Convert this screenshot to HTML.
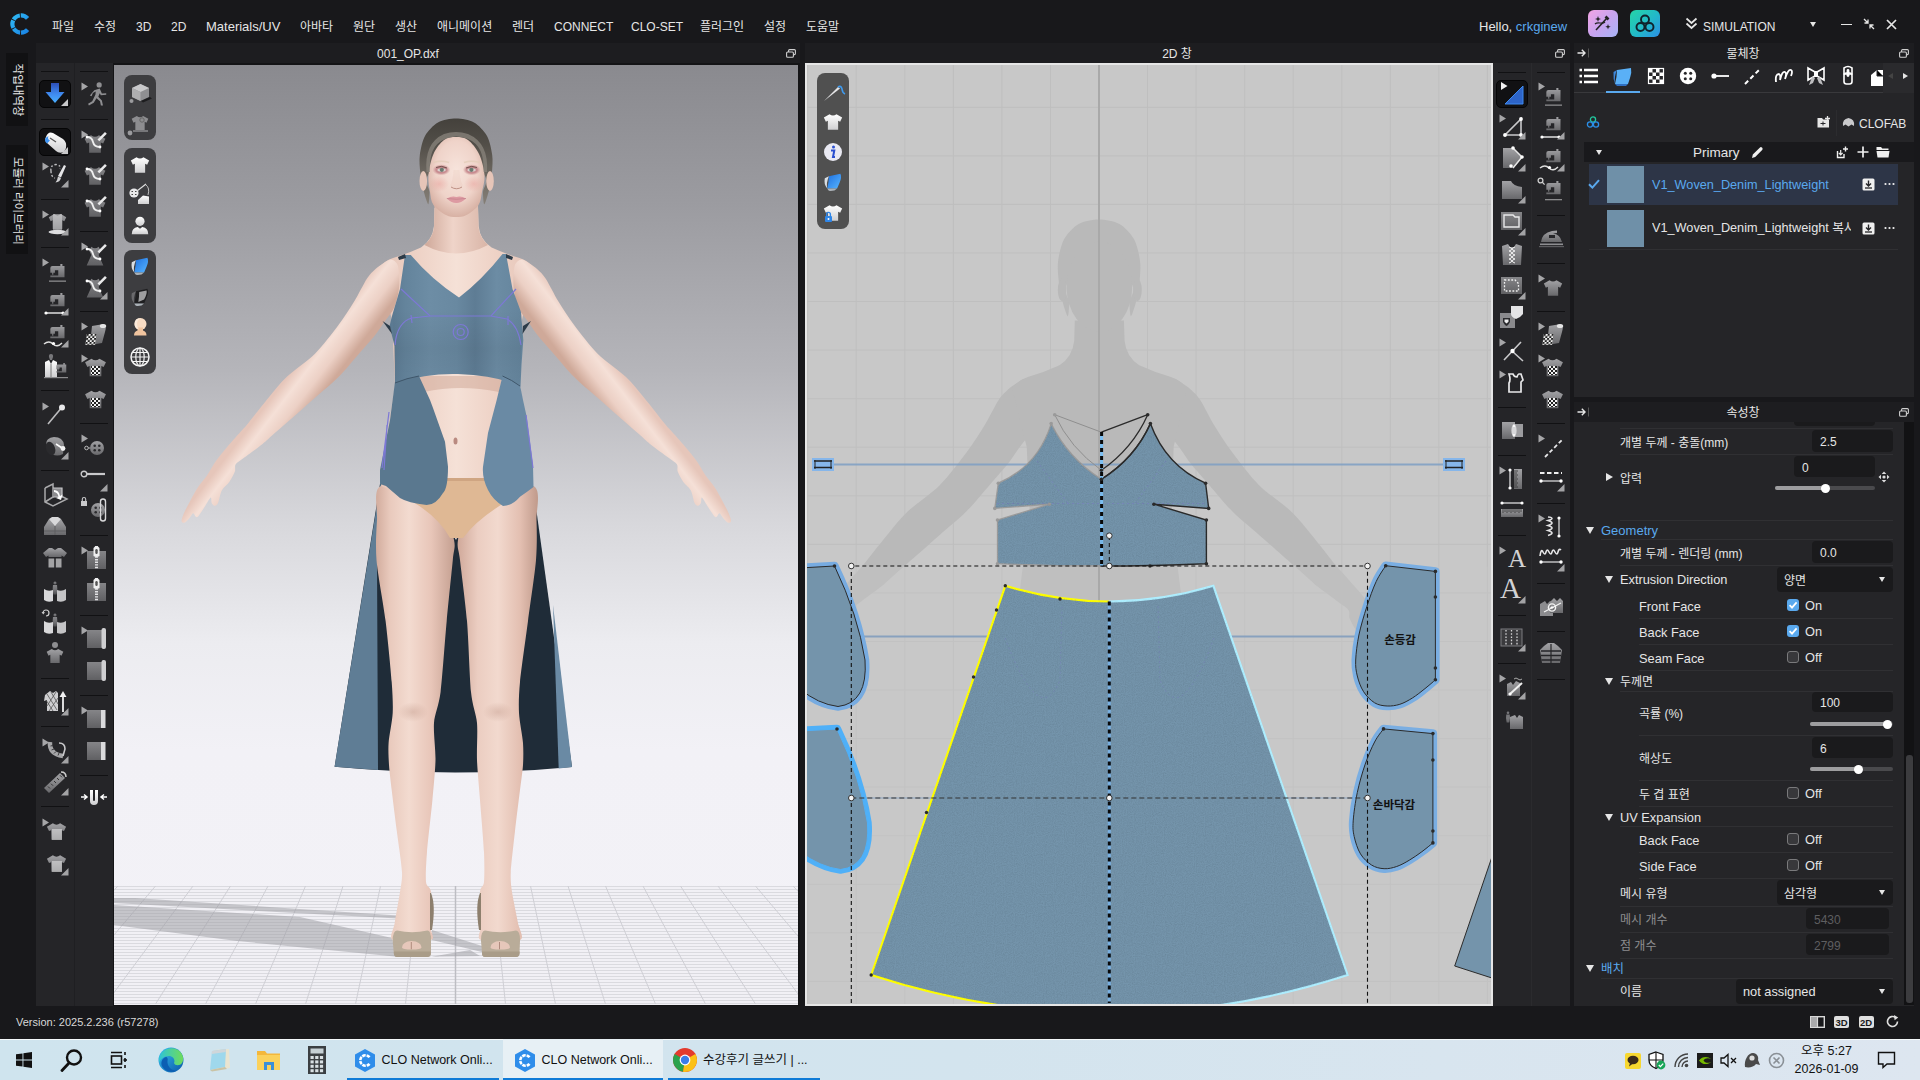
<!DOCTYPE html><html lang="ko"><head><meta charset="utf-8"><title>CLO</title><style>
*{box-sizing:border-box;margin:0;padding:0}
html,body{width:1920px;height:1080px;overflow:hidden;background:#18181b}
body{font-family:"Liberation Sans","Noto Sans CJK KR",sans-serif;font-size:12px;color:#e6e6e6;position:relative}
.a{position:absolute}
.t{position:absolute;white-space:nowrap;line-height:1}
.bar{position:absolute;background:#1d1d20}
.tb{position:absolute;background:#252528}
.sep{position:absolute;height:1px;background:#111113}
.pill{position:absolute;background:#3c3c3f;border-radius:8px}
.inp{position:absolute;background:#19191b;border-radius:4px;height:20px}
.ln{position:absolute;height:1px;background:#2f2f32}
.cb{position:absolute;width:11px;height:11px;border:1px solid #777;border-radius:3px;background:#2e2e31}
.cbon{position:absolute;width:11px;height:11px;border-radius:2px;background:#5aa9ee}
.tri{position:absolute;width:0;height:0;border-left:4px solid transparent;border-right:4px solid transparent;border-top:7px solid #e6e6e6}
.trir{position:absolute;width:0;height:0;border-top:4px solid transparent;border-bottom:4px solid transparent;border-left:7px solid #e6e6e6}
.dd{position:absolute;width:0;height:0;border-left:3.5px solid transparent;border-right:3.5px solid transparent;border-top:5px solid #e6e6e6}
.sl{position:absolute;height:4px;border-radius:2px;background:#4a4a4d}
.slf{position:absolute;height:4px;border-radius:2px;background:#9a9a9c}
.kn{position:absolute;width:9px;height:9px;border-radius:5px;background:#fff}
</style></head><body>
<div class="a" style="left:0px;top:0px;width:1920px;height:43px;background:#18181b;"></div>
<div class="t" style="left:52px;top:20.5px;font-size:12px;color:#e6e6e6;">파일</div>
<div class="t" style="left:94px;top:20.5px;font-size:12px;color:#e6e6e6;">수정</div>
<div class="t" style="left:136px;top:20.5px;font-size:12px;color:#e6e6e6;">3D</div>
<div class="t" style="left:171px;top:20.5px;font-size:12px;color:#e6e6e6;">2D</div>
<div class="t" style="left:206px;top:20.0px;font-size:13px;color:#e6e6e6;">Materials/UV</div>
<div class="t" style="left:300px;top:20.5px;font-size:12px;color:#e6e6e6;">아바타</div>
<div class="t" style="left:353px;top:20.5px;font-size:12px;color:#e6e6e6;">원단</div>
<div class="t" style="left:395px;top:20.5px;font-size:12px;color:#e6e6e6;">생산</div>
<div class="t" style="left:437px;top:20.5px;font-size:12px;color:#e6e6e6;">애니메이션</div>
<div class="t" style="left:512px;top:20.5px;font-size:12px;color:#e6e6e6;">렌더</div>
<div class="t" style="left:554px;top:20.5px;font-size:12px;color:#e6e6e6;">CONNECT</div>
<div class="t" style="left:631px;top:20.5px;font-size:12px;color:#e6e6e6;">CLO-SET</div>
<div class="t" style="left:700px;top:20.5px;font-size:12px;color:#e6e6e6;">플러그인</div>
<div class="t" style="left:764px;top:20.5px;font-size:12px;color:#e6e6e6;">설정</div>
<div class="t" style="left:806px;top:20.5px;font-size:12px;color:#e6e6e6;">도움말</div>
<div class="t" style="left:1479px;top:19.5px;font-size:13px;color:#e6e6e6;">Hello, <span style="color:#5aa9ee">crkginew</span></div>
<div class="t" style="left:1703px;top:20.5px;font-size:12px;color:#e6e6e6;">SIMULATION</div>
<div class="a" style="left:36px;top:43px;width:764px;height:20px;background:#1d1d20;"></div>
<div class="a" style="left:805px;top:43px;width:765px;height:20px;background:#1d1d20;"></div>
<div class="a" style="left:1574px;top:43px;width:340px;height:20px;background:#1d1d20;"></div>
<div class="a" style="left:1574px;top:402px;width:340px;height:20px;background:#1d1d20;"></div>
<div class="t" style="left:408px;transform:translateX(-50%);top:47.5px;font-size:12px;color:#e6e6e6;">001_OP.dxf</div>
<div class="t" style="left:1177px;transform:translateX(-50%);top:47.5px;font-size:12px;color:#e6e6e6;">2D 창</div>
<div class="t" style="left:1743px;transform:translateX(-50%);top:47.5px;font-size:12px;color:#e6e6e6;">물체창</div>
<div class="t" style="left:1743px;transform:translateX(-50%);top:406.5px;font-size:12px;color:#e6e6e6;">속성창</div>
<div class="a" style="left:6px;top:53px;width:22px;height:73px;background:#111113;"></div>
<div class="a" style="left:6px;top:145px;width:22px;height:109px;background:#111113;"></div>
<div class="t" style="left:17px;top:90px;font-size:11.5px;transform:translate(-50%,-50%) rotate(90deg)">작업내역창</div>
<div class="t" style="left:17px;top:200.5px;font-size:11.5px;transform:translate(-50%,-50%) rotate(90deg)">모듈러 라이브러리</div>
<div class="a" style="left:36px;top:63px;width:77px;height:943px;background:#252528;"></div>
<div class="a" style="left:74px;top:63px;width:1px;height:943px;background:#1f1f22;"></div>
<div class="a" style="left:1493px;top:63px;width:77px;height:943px;background:#252528;"></div>
<div class="a" style="left:1531px;top:63px;width:1px;height:943px;background:#2b2b2e;"></div>
<div class="a" style="left:113px;top:63px;width:687px;height:943px;background:#141416;"></div>
<div class="a" id="v3d" style="left:114px;top:65px;width:684px;height:940px;background:linear-gradient(#8a8a8f 0%,#9b9ba0 14.5%,#b5b5ba 32.5%,#d8d8dc 49%,#ececf0 61.5%,#f2f1f6 73%,#f3f2f7 100%);overflow:hidden"><svg style="position:absolute;left:0;top:0" width="684" height="940" viewBox="114 65 684 940">
<defs>
<linearGradient id="skinL" x1="0" x2="1" y1="0" y2="0"><stop offset="0" stop-color="#d2ac9d"/><stop offset="0.18" stop-color="#e9cabd"/><stop offset="0.42" stop-color="#f3dbd0"/><stop offset="0.7" stop-color="#e8c6b9"/><stop offset="1" stop-color="#c49f90"/></linearGradient>
<linearGradient id="skinR" x1="0" x2="1" y1="0" y2="0"><stop offset="0" stop-color="#d0a99a"/><stop offset="0.25" stop-color="#ebcdc1"/><stop offset="0.5" stop-color="#f2d9ce"/><stop offset="0.78" stop-color="#e3bfb1"/><stop offset="1" stop-color="#c09a8b"/></linearGradient>
<linearGradient id="armL" gradientUnits="userSpaceOnUse" x1="296" y1="366" x2="326" y2="389"><stop offset="0" stop-color="#e6c6ba"/><stop offset="0.3" stop-color="#f5e0d7"/><stop offset="0.65" stop-color="#ecd0c5"/><stop offset="1" stop-color="#cfa999"/></linearGradient>
<linearGradient id="armR" gradientUnits="userSpaceOnUse" x1="616.6" y1="366" x2="586.6" y2="389"><stop offset="0" stop-color="#e6c6ba"/><stop offset="0.3" stop-color="#f5e0d7"/><stop offset="0.65" stop-color="#ecd0c5"/><stop offset="1" stop-color="#cfa999"/></linearGradient>
<linearGradient id="torso" x1="0" x2="1"><stop offset="0" stop-color="#e6c6b9"/><stop offset="0.25" stop-color="#eed2c6"/><stop offset="0.5" stop-color="#f5e1d7"/><stop offset="0.75" stop-color="#eed2c6"/><stop offset="1" stop-color="#e6c6b9"/></linearGradient>
<linearGradient id="bod" x1="0" x2="1"><stop offset="0" stop-color="#5a7890"/><stop offset="0.12" stop-color="#64849c"/><stop offset="0.3" stop-color="#6d8da5"/><stop offset="0.5" stop-color="#6989a1"/><stop offset="0.64" stop-color="#5e7c94"/><stop offset="0.8" stop-color="#6c8ca4"/><stop offset="1" stop-color="#64849c"/></linearGradient>
<linearGradient id="bodv" x1="0" x2="0" y1="0" y2="1"><stop offset="0" stop-color="#000" stop-opacity="0"/><stop offset="0.5" stop-color="#000" stop-opacity="0.06"/><stop offset="1" stop-color="#000" stop-opacity="0.02"/></linearGradient>
<linearGradient id="hair" x1="0" x2="0" y1="0" y2="1"><stop offset="0" stop-color="#44413c"/><stop offset="0.3" stop-color="#524e48"/><stop offset="0.6" stop-color="#69645d"/><stop offset="1" stop-color="#857f77"/></linearGradient>
<radialGradient id="face" cx="0.5" cy="0.42" r="0.62"><stop offset="0" stop-color="#f7e4dc"/><stop offset="0.6" stop-color="#efd3c9"/><stop offset="1" stop-color="#d3ab9d"/></radialGradient>
<linearGradient id="neck" x1="0" x2="1"><stop offset="0" stop-color="#cfa899"/><stop offset="0.45" stop-color="#efd4c9"/><stop offset="1" stop-color="#d9b5a7"/></linearGradient>
<radialGradient id="knee"><stop offset="0" stop-color="#c39a8b" stop-opacity="0.45"/><stop offset="1" stop-color="#c39a8b" stop-opacity="0"/></radialGradient>
<radialGradient id="cheek"><stop offset="0" stop-color="#e89b96" stop-opacity="0.45"/><stop offset="1" stop-color="#e89b96" stop-opacity="0"/></radialGradient><radialGradient id="eyesh"><stop offset="0" stop-color="#bd7a82" stop-opacity="1"/><stop offset="0.62" stop-color="#c4868b" stop-opacity="0.9"/><stop offset="1" stop-color="#d39c9c" stop-opacity="0"/></radialGradient>
<pattern id="hl" x="0" y="886" width="8" height="3" patternUnits="userSpaceOnUse"><rect width="8" height="3" fill="#f1f0f5"/><rect width="8" height="1" fill="#dadadf"/></pattern>
</defs>
<rect x="114" y="886" width="684" height="119" fill="url(#hl)"/>
<line x1="80.5" y1="886" x2="-44.5" y2="1004" stroke="#cfcfd5" stroke-width="1"/>
<line x1="118.0" y1="886" x2="5.5" y2="1004" stroke="#cfcfd5" stroke-width="1"/>
<line x1="155.5" y1="886" x2="55.5" y2="1004" stroke="#cfcfd5" stroke-width="1"/>
<line x1="193.0" y1="886" x2="105.5" y2="1004" stroke="#cfcfd5" stroke-width="1"/>
<line x1="230.5" y1="886" x2="155.5" y2="1004" stroke="#cfcfd5" stroke-width="1"/>
<line x1="268.0" y1="886" x2="205.5" y2="1004" stroke="#cfcfd5" stroke-width="1"/>
<line x1="305.5" y1="886" x2="255.5" y2="1004" stroke="#cfcfd5" stroke-width="1"/>
<line x1="343.0" y1="886" x2="305.5" y2="1004" stroke="#cfcfd5" stroke-width="1"/>
<line x1="380.5" y1="886" x2="355.5" y2="1004" stroke="#cfcfd5" stroke-width="1"/>
<line x1="418.0" y1="886" x2="405.5" y2="1004" stroke="#cfcfd5" stroke-width="1"/>
<line x1="455.5" y1="886" x2="455.5" y2="1004" stroke="#bdbdc3" stroke-width="1.5"/>
<line x1="493.0" y1="886" x2="505.5" y2="1004" stroke="#cfcfd5" stroke-width="1"/>
<line x1="530.5" y1="886" x2="555.5" y2="1004" stroke="#cfcfd5" stroke-width="1"/>
<line x1="568.0" y1="886" x2="605.5" y2="1004" stroke="#cfcfd5" stroke-width="1"/>
<line x1="605.5" y1="886" x2="655.5" y2="1004" stroke="#cfcfd5" stroke-width="1"/>
<line x1="643.0" y1="886" x2="705.5" y2="1004" stroke="#cfcfd5" stroke-width="1"/>
<line x1="680.5" y1="886" x2="755.5" y2="1004" stroke="#cfcfd5" stroke-width="1"/>
<line x1="718.0" y1="886" x2="805.5" y2="1004" stroke="#cfcfd5" stroke-width="1"/>
<line x1="755.5" y1="886" x2="855.5" y2="1004" stroke="#cfcfd5" stroke-width="1"/>
<line x1="793.0" y1="886" x2="905.5" y2="1004" stroke="#cfcfd5" stroke-width="1"/>
<line x1="830.5" y1="886" x2="955.5" y2="1004" stroke="#cfcfd5" stroke-width="1"/>
<path d="M114 898 L135 898 L398 915.5 L398 918.5 L114 903Z" fill="#9a9aa0" fill-opacity="0.5"/>
<path d="M114 905 L300 917 L392 938 L396 955 L430 957 L470 950 L480 956 L400 957 L237 941 L114 925Z" fill="#9a9aa0" fill-opacity="0.5"/>
<path d="M432 930 L482 946 L482 952 L432 940Z" fill="#9a9aa0" fill-opacity="0.5"/>
<path d="M380 484 L334.6 766.8 Q455 778 572 767 L533 486 Z" fill="#1f2c38"/>
<path d="M381 480 L334.6 766.8 L378 770 L377 560 L382 500Z" fill="#5f7d95"/>
<path d="M553 605 L572 767 L558.7 768.5 Z" fill="#6a8aa4"/>
<path d="M381.0 486.0 C372.6 488.7 377.6 510.1 377.0 520.0 C376.4 529.9 375.4 546.5 376.5 560.0 C377.6 573.5 383.6 604.7 385.6 621.0 C387.6 637.3 390.8 669.7 391.7 682.0 C392.6 694.3 393.1 704.9 392.7 713.0 C392.3 721.1 389.1 736.1 388.6 743.0 C388.1 749.9 388.6 758.7 389.0 765.0 C389.4 771.3 390.7 781.2 391.7 790.0 C392.7 798.8 395.4 820.1 396.8 831.0 C398.2 841.9 401.6 863.9 402.0 872.0 C402.4 880.1 401.0 885.2 400.0 892.0 C399.0 898.8 395.6 916.6 394.7 923.0 C393.8 929.4 388.2 937.7 393.0 940.0 C397.8 942.3 426.1 942.0 431.0 940.0 C435.9 938.0 430.0 931.4 430.0 925.0 C430.0 918.6 431.5 897.7 431.0 892.0 C430.5 886.3 426.5 887.3 426.0 882.0 C425.5 876.7 426.1 862.9 427.0 852.0 C427.9 841.1 431.3 812.3 432.4 800.0 C433.5 787.7 435.3 770.3 435.5 760.0 C435.7 749.7 433.3 732.1 434.0 723.0 C434.7 713.9 438.9 705.6 440.6 692.0 C442.3 678.4 445.1 638.6 446.7 621.0 C448.3 603.4 451.8 570.8 452.8 560.0 C453.8 549.2 455.7 548.0 454.0 540.0 C452.3 532.0 449.7 507.2 440.0 500.0 C430.3 492.8 389.4 483.3 381.0 486.0Z" fill="url(#skinL)"/>
<path d="M533.0 486.0 C541.9 488.7 536.1 510.1 536.5 520.0 C536.9 529.9 537.1 546.5 536.0 560.0 C534.9 573.5 530.1 604.7 528.0 621.0 C525.9 637.3 521.2 669.7 520.0 682.0 C518.8 694.3 518.6 704.9 519.0 713.0 C519.4 721.1 522.5 736.1 523.0 743.0 C523.5 749.9 523.4 758.7 523.0 765.0 C522.6 771.3 521.1 781.2 520.0 790.0 C518.9 798.8 516.2 820.1 515.0 831.0 C513.8 841.9 511.2 863.9 510.8 872.0 C510.4 880.1 511.0 885.2 512.0 892.0 C513.0 898.8 516.9 916.6 518.0 923.0 C519.1 929.4 524.9 937.7 520.0 940.0 C515.1 942.3 486.2 942.0 481.0 940.0 C475.8 938.0 481.1 931.4 481.0 925.0 C480.9 918.6 479.6 897.7 480.0 892.0 C480.4 886.3 483.5 887.3 484.0 882.0 C484.5 876.7 484.5 862.9 484.0 852.0 C483.5 841.1 480.9 812.3 480.0 800.0 C479.1 787.7 477.4 770.3 477.0 760.0 C476.6 749.7 477.8 732.1 477.0 723.0 C476.2 713.9 472.3 705.6 471.0 692.0 C469.7 678.4 468.5 638.6 467.0 621.0 C465.5 603.4 461.2 570.8 460.0 560.0 C458.8 549.2 456.7 548.0 458.0 540.0 C459.3 532.0 460.0 507.2 470.0 500.0 C480.0 492.8 524.1 483.3 533.0 486.0Z" fill="url(#skinR)"/>
<ellipse cx="413" cy="712" rx="15" ry="10" fill="url(#knee)"/><ellipse cx="498" cy="712" rx="15" ry="10" fill="url(#knee)"/>
<path d="M392.7 941 Q392.5 931 397 930.5 Q412 934 427.5 930.5 Q431.5 931 431 941 L431 953 Q431 957 427 957 L397 957 Q394 957 393.8 953 Z" fill="#b9ac99"/>
<path d="M481 941 Q480.8 931 485 930.5 Q500 934 516 930.5 Q520.3 931 520 941 L519.5 953 Q519.5 957 516 957 L485 957 Q482 957 482 953 Z" fill="#b9ac99"/>
<path d="M402 947.5 Q402.5 941.5 411.5 941 Q421 941.5 421.5 947.5 Q421 949.5 411.5 949.5 Q402.5 949.5 402 947.5Z" fill="#e6c7ba"/><path d="M490.5 947.5 Q491 941.5 500 941 Q509.5 941.5 510 947.5 Q509.5 949.5 500 949.5 Q491 949.5 490.5 947.5Z" fill="#e6c7ba"/>
<path d="M411.3 942V949.3M499.5 942V949.3" stroke="#b08b7e" stroke-width="1"/>
<path d="M394 951.5 H430.8 V953 Q431 957 427 957 L397 957 Q394 957 393.8 953Z" fill="#a99c88"/><path d="M482 951.5 H519.6 V953 Q519.5 957 516 957 L485 957 Q482 957 482 953Z" fill="#a99c88"/>
<path d="M431 893 Q436 905 432 930 L430 930 L430 893Z" fill="#8d7f6d"/><path d="M480 893 Q475 905 479 930 L481 930 L481 893Z" fill="#8d7f6d"/>
<path d="M434.5 208 L434 226 Q432.5 240 421 247.5 Q408 253.5 393 258 Q384 261 379 268 L392 320 L395 385 L388 430 L381 486 L440 510 L456 540 L470 510 L533 486 L526 430 L520 385 L522 320 L533.6 268 Q528.6 261 519.6 258 Q504.6 253.5 491.6 247.5 Q480 240 478.6 226 L478 208 Z" fill="url(#torso)"/>
<path d="M434.5 205 L478 205 L478.6 228 Q480 238 488 245 Q456 262 424.5 245 Q432.5 238 434 228Z" fill="url(#neck)"/>
<path d="M398.0 266.0 C396.8 261.7 393.2 259.9 391.0 259.5 C388.8 259.1 385.4 262.0 383.0 263.5 C380.6 265.0 377.4 267.2 375.0 269.5 C372.6 271.8 370.1 273.7 367.0 278.5 C363.9 283.3 358.3 294.8 354.0 301.8 C349.7 308.8 344.4 317.2 338.5 325.0 C332.6 332.8 322.8 345.9 315.0 353.7 C307.2 361.5 293.6 370.4 286.6 377.0 C279.6 383.6 274.3 390.7 268.5 397.7 C262.7 404.7 251.7 418.9 247.8 423.7 C243.9 428.5 245.3 426.6 242.2 430.0 C239.1 433.4 231.3 442.1 227.4 446.7 C223.5 451.3 219.4 456.3 216.3 460.6 C213.2 464.9 209.8 471.4 207.0 475.4 C204.2 479.4 200.3 483.6 197.8 487.4 C195.3 491.1 192.5 496.5 190.4 500.4 C188.3 504.3 185.2 510.2 183.9 513.3 C182.6 516.4 181.4 519.8 181.6 521.2 C181.8 522.6 183.8 523.0 185.0 522.5 C186.2 522.0 188.3 519.4 189.5 518.0 C190.7 516.6 192.2 513.5 193.1 513.3 C194.0 513.1 195.0 516.4 195.8 516.8 C196.6 517.2 197.1 517.6 198.5 516.0 C199.9 514.4 203.4 508.8 205.2 506.0 C207.0 503.2 209.7 498.1 210.7 497.6 C211.7 497.2 211.1 501.8 211.7 503.0 C212.3 504.2 213.5 505.8 214.4 505.8 C215.3 505.8 216.9 505.3 218.0 503.0 C219.1 500.7 220.2 493.4 221.9 490.2 C223.6 487.0 227.4 484.7 229.3 481.9 C231.2 479.1 233.8 474.3 234.8 471.7 C235.8 469.1 234.3 466.4 235.7 464.3 C237.1 462.2 240.0 460.9 244.0 457.8 C248.0 454.7 258.1 447.5 262.6 443.9 C267.1 440.3 268.9 438.2 273.7 434.0 C278.5 429.8 288.2 421.3 294.4 415.9 C300.6 410.5 308.4 403.5 315.0 397.7 C321.6 391.9 331.9 383.6 338.5 377.0 C345.1 370.4 353.6 359.9 359.0 353.7 C364.4 347.5 370.9 340.4 374.8 335.5 C378.7 330.6 382.1 325.1 385.0 321.0 C387.9 316.9 391.9 312.9 394.0 308.0 C396.1 303.1 398.4 294.3 399.0 288.0 C399.6 281.7 399.2 270.3 398.0 266.0Z" fill="url(#armL)"/>
<path d="M514.6 266.0 C515.8 261.7 519.4 259.9 521.6 259.5 C523.9 259.1 527.2 262.0 529.6 263.5 C532.0 265.0 535.2 267.2 537.6 269.5 C540.0 271.8 542.5 273.7 545.6 278.5 C548.8 283.3 554.3 294.8 558.6 301.8 C562.9 308.8 568.2 317.2 574.1 325.0 C580.0 332.8 589.8 345.9 597.6 353.7 C605.4 361.5 619.0 370.4 626.0 377.0 C633.0 383.6 638.3 390.7 644.1 397.7 C649.9 404.7 660.9 418.9 664.8 423.7 C668.7 428.5 667.3 426.6 670.4 430.0 C673.5 433.4 681.3 442.1 685.2 446.7 C689.1 451.3 693.2 456.3 696.3 460.6 C699.4 464.9 702.8 471.4 705.6 475.4 C708.4 479.4 712.3 483.6 714.8 487.4 C717.3 491.1 720.1 496.5 722.2 500.4 C724.3 504.3 727.4 510.2 728.7 513.3 C730.0 516.4 731.2 519.8 731.0 521.2 C730.8 522.6 728.8 523.0 727.6 522.5 C726.4 522.0 724.3 519.4 723.1 518.0 C721.9 516.6 720.4 513.5 719.5 513.3 C718.6 513.1 717.6 516.4 716.8 516.8 C716.0 517.2 715.5 517.6 714.1 516.0 C712.7 514.4 709.2 508.8 707.4 506.0 C705.6 503.2 702.9 498.1 701.9 497.6 C700.9 497.2 701.5 501.8 700.9 503.0 C700.3 504.2 699.1 505.8 698.2 505.8 C697.3 505.8 695.7 505.3 694.6 503.0 C693.5 500.7 692.4 493.4 690.7 490.2 C689.0 487.0 685.2 484.7 683.3 481.9 C681.4 479.1 678.8 474.3 677.8 471.7 C676.8 469.1 678.3 466.4 676.9 464.3 C675.5 462.2 672.6 460.9 668.6 457.8 C664.6 454.7 654.5 447.5 650.0 443.9 C645.5 440.3 643.7 438.2 638.9 434.0 C634.1 429.8 624.4 421.3 618.2 415.9 C612.0 410.5 604.2 403.5 597.6 397.7 C591.0 391.9 580.7 383.6 574.1 377.0 C567.5 370.4 559.0 359.9 553.6 353.7 C548.2 347.5 541.7 340.4 537.8 335.5 C533.9 330.6 530.5 325.1 527.6 321.0 C524.7 316.9 520.7 312.9 518.6 308.0 C516.5 303.1 514.2 294.3 513.6 288.0 C513.0 281.7 513.4 270.3 514.6 266.0Z" fill="url(#armR)"/>
<path d="M419 376 L502.5 376 L499 392 Q460 384 424 392Z" fill="#c99f8f" opacity="0.45"/>
<path d="M430 478 L497 478 L520 494 Q480 515 463 538 L450 538 Q436 512 398 494 Z" fill="#dfb894"/>
<path d="M430 478 L497 478 L497 481 L430 481Z" fill="#cfa582"/>
<ellipse cx="455.5" cy="441" rx="2" ry="3.5" fill="#b98a80"/>
<path d="M405 255 L410.8 255 Q432 280 459 297.5 Q482 280 502.5 254 L506 254 L512.5 289 L521 312 L523.3 340 L521.5 365 L520.5 386.7 Q500 376 458 374 Q428 373 395 383 L394.5 346 L389.6 326 L392 316 L400 289 Z" fill="url(#bod)"/>
<path d="M392.5 310 L523 310 L520 386.7 Q500 376 458 374 Q428 373 395 383 Z" fill="url(#bodv)"/>
<path d="M398 257 L405 254 L406 258 L399 260Z" fill="#2c3b48"/><path d="M506 254 L513 257 L512 260 L506 258Z" fill="#2c3b48"/>
<path d="M382.5 321 L390 326 L392 334 Z" fill="#2c3b48"/><path d="M531 321 L523 326 L522.5 334 Z" fill="#2c3b48"/>
<path d="M395 381.7 L419 376 L430 400 L433 408 L445 441.7 L448 466.7 Q448 488 443 493 Q436 505 426.7 505 Q408 503 400 498 L386 486 L380 484 L380 470 L390 420 Z" fill="#5a788f"/>
<path d="M502.5 376 L520 385 L523 400 L526.7 416.7 L533 466 L533.5 487 Q527 492 520 496.7 Q512 506 503 506 Q493 500 488 490 Q482 478 483 466.7 L488 433 L496.7 400 Z" fill="#6a8aa4"/>
<path d="M395 383 Q407 378 419 376" stroke="#3f566a" stroke-width="1" fill="none"/><path d="M502.5 376 Q512 380 520 386" stroke="#3f566a" stroke-width="1" fill="none"/>
<g stroke="#7d78d6" stroke-width="1.2" fill="none"><path d="M401 289 L430 316 L491 316 L516 289"/><path d="M395 345 Q397 322 412 318 L430 316"/><path d="M491 316 L507 319 Q518 325 521 345"/><circle cx="460.7" cy="332" r="7.5"/><circle cx="460.7" cy="332" r="3.5"/><path d="M411 315 L412 323 M508 316 L508 325"/><path d="M389 412 L382 468 M387 425 L384 470"/><path d="M526 415 L533 468"/></g>
<path d="M456.0 118.5 C450.6 118.5 442.6 119.9 438.0 122.5 C433.4 125.1 427.7 131.1 425.0 136.0 C422.3 140.9 420.5 149.6 419.8 155.0 C419.0 160.4 419.8 167.3 420.2 172.0 C420.6 176.7 421.6 181.9 422.5 186.0 C423.4 190.1 425.1 196.3 426.0 199.0 C426.9 201.7 428.0 205.1 428.5 204.0 C429.0 202.9 429.6 196.2 429.5 192.0 C429.4 187.8 423.5 182.3 427.5 176.0 C431.5 169.7 447.4 150.0 456.0 150.0 C464.6 150.0 480.9 169.7 485.0 176.0 C489.1 182.3 483.1 187.8 483.0 192.0 C482.9 196.2 483.5 202.9 484.0 204.0 C484.5 205.1 485.6 201.7 486.5 199.0 C487.4 196.3 489.2 190.1 490.0 186.0 C490.8 181.9 491.7 176.7 492.0 172.0 C492.3 167.3 493.0 160.4 492.2 155.0 C491.5 149.6 489.7 140.9 487.0 136.0 C484.3 131.1 478.6 125.1 474.0 122.5 C469.4 119.9 461.4 118.5 456.0 118.5Z" fill="url(#hair)"/>
<ellipse cx="423.3" cy="181" rx="3.8" ry="10" fill="#e6c5b8"/><ellipse cx="490" cy="181" rx="3.8" ry="10" fill="#e6c5b8"/>
<path d="M456.0 137.0 C452.0 137.0 447.8 137.2 444.0 140.0 C440.2 142.8 436.1 148.2 433.5 154.0 C430.9 159.8 429.1 168.7 428.5 175.0 C427.9 181.3 429.2 187.0 430.0 192.0 C430.8 197.0 430.8 201.2 433.5 205.0 C436.2 208.8 442.2 213.0 446.0 215.0 C449.8 217.0 452.6 217.0 456.0 217.0 C459.4 217.0 462.8 217.0 466.5 215.0 C470.2 213.0 475.9 208.8 478.5 205.0 C481.1 201.2 481.0 197.0 482.0 192.0 C483.0 187.0 485.0 181.3 484.5 175.0 C484.0 168.7 481.8 159.8 479.0 154.0 C476.2 148.2 471.8 142.8 468.0 140.0 C464.2 137.2 460.0 137.0 456.0 137.0Z" fill="url(#face)"/>
<path d="M430 172 Q428 146 445 139 Q456 134 468 139 Q485 146 483.5 172 L487 172 Q489 143 468 134 Q456 130 444 134 Q424 143 426.5 172Z" fill="#8a847c" opacity="0.75"/>
<ellipse cx="441.4" cy="169.8" rx="9" ry="5.6" fill="url(#eyesh)"/><ellipse cx="471.8" cy="169.8" rx="9" ry="5.6" fill="url(#eyesh)"/>
<ellipse cx="441.6" cy="170" rx="4.2" ry="1.7" fill="#d8d2cf"/><ellipse cx="471.6" cy="170" rx="4.2" ry="1.7" fill="#d8d2cf"/><circle cx="441.8" cy="169.8" r="2.1" fill="#6b7b70"/><circle cx="471.4" cy="169.8" r="2.1" fill="#6b7b70"/>
<path d="M433.5 162.5 Q441 160 449 162.5 M464 162.5 Q472 160 479.5 162.5" stroke="#e4cdb9" stroke-width="1.6" fill="none" opacity="0.8"/>
<path d="M436 167.5 Q441.6 165 447 168" stroke="#5a4038" stroke-width="0.8" fill="none"/><path d="M466 168 Q471.6 165 477 167.5" stroke="#5a4038" stroke-width="0.8" fill="none"/>
<path d="M450.5 185 Q451 189 456.5 189 Q462 189 462.5 185 Q460 180 459.5 170 L453.5 170 Q453 180 450.5 185Z" fill="#e2bcae" opacity="0.18"/><path d="M451 187 Q456.5 190.5 462 187" stroke="#b88a7e" stroke-width="0.9" fill="none"/>
<path d="M446.8 198.5 Q452 195.5 456.4 197 Q461 195.5 466 198.5 Q461 203 456.4 203 Q451.5 203 446.8 198.5Z" fill="#dd9aa2"/><path d="M446.8 198.5 Q456.4 200 466 198.5" stroke="#c27e88" stroke-width="0.7" fill="none"/>
<ellipse cx="439" cy="184" rx="10" ry="8" fill="url(#cheek)"/><ellipse cx="474" cy="184" rx="10" ry="8" fill="url(#cheek)"/>
</svg>
<div class="pill" style="left:10px;top:10px;width:32px;height:65px;background:#3d3d40"></div>
<div class="pill" style="left:10px;top:83px;width:32px;height:95px;background:#3d3d40"></div>
<div class="pill" style="left:10px;top:185px;width:32px;height:124px;background:#3d3d40"></div></div>
<div class="a" style="left:805px;top:63px;width:688px;height:943px;background:#e6e6e6;"></div>
<div class="a" id="v2d" style="left:807px;top:65px;width:684px;height:939px;background:#c8c8c8;overflow:hidden"><svg style="position:absolute;left:0;top:0" width="684" height="939" viewBox="807 65 684 939">
<defs>
<filter id="tex" x="0" y="0" width="100%" height="100%"><feTurbulence type="fractalNoise" baseFrequency="0.9" numOctaves="2" seed="3" result="n"/><feColorMatrix in="n" type="matrix" values="0 0 0 0 0  0 0 0 0 0  0 0 0 0 0  0.6 0.6 0 0 -0.45" result="a"/><feComposite in="a" in2="SourceGraphic" operator="in"/></filter>
</defs>
<path d="M759.2 65V1004 M807.7 65V1004 M856.2 65V1004 M904.8 65V1004 M953.4 65V1004 M1001.9 65V1004 M1050.5 65V1004 M1147.5 65V1004 M1196.1 65V1004 M1244.7 65V1004 M1293.2 65V1004 M1341.8 65V1004 M1390.3 65V1004 M1438.8 65V1004 M1487.4 65V1004 M807 107.3H1491 M807 155.9H1491 M807 204.4H1491 M807 253.0H1491 M807 301.5H1491 M807 350.1H1491 M807 398.7H1491 M807 447.2H1491 M807 495.8H1491 M807 544.3H1491 M807 592.9H1491 M807 641.5H1491 M807 690.0H1491 M807 738.6H1491 M807 787.1H1491 M807 835.7H1491 M807 884.3H1491 M807 932.8H1491 M807 981.4H1491 M807 1029.9H1491" stroke="#bfbfbf" stroke-width="1" fill="none"/>
<g transform="translate(1099.4 219.4) scale(1.13) translate(-456.3 -118.5)" fill="#b9b9b9">
<path d="M398.0 266.0 C396.8 261.7 393.2 259.9 391.0 259.5 C388.8 259.1 385.4 262.0 383.0 263.5 C380.6 265.0 377.4 267.2 375.0 269.5 C372.6 271.8 370.1 273.7 367.0 278.5 C363.9 283.3 358.3 294.8 354.0 301.8 C349.7 308.8 344.4 317.2 338.5 325.0 C332.6 332.8 322.8 345.9 315.0 353.7 C307.2 361.5 293.6 370.4 286.6 377.0 C279.6 383.6 274.3 390.7 268.5 397.7 C262.7 404.7 251.7 418.9 247.8 423.7 C243.9 428.5 245.3 426.6 242.2 430.0 C239.1 433.4 231.3 442.1 227.4 446.7 C223.5 451.3 219.4 456.3 216.3 460.6 C213.2 464.9 209.8 471.4 207.0 475.4 C204.2 479.4 200.3 483.6 197.8 487.4 C195.3 491.1 192.5 496.5 190.4 500.4 C188.3 504.3 185.2 510.2 183.9 513.3 C182.6 516.4 181.4 519.8 181.6 521.2 C181.8 522.6 183.8 523.0 185.0 522.5 C186.2 522.0 188.3 519.4 189.5 518.0 C190.7 516.6 192.2 513.5 193.1 513.3 C194.0 513.1 195.0 516.4 195.8 516.8 C196.6 517.2 197.1 517.6 198.5 516.0 C199.9 514.4 203.4 508.8 205.2 506.0 C207.0 503.2 209.7 498.1 210.7 497.6 C211.7 497.2 211.1 501.8 211.7 503.0 C212.3 504.2 213.5 505.8 214.4 505.8 C215.3 505.8 216.9 505.3 218.0 503.0 C219.1 500.7 220.2 493.4 221.9 490.2 C223.6 487.0 227.4 484.7 229.3 481.9 C231.2 479.1 233.8 474.3 234.8 471.7 C235.8 469.1 234.3 466.4 235.7 464.3 C237.1 462.2 240.0 460.9 244.0 457.8 C248.0 454.7 258.1 447.5 262.6 443.9 C267.1 440.3 268.9 438.2 273.7 434.0 C278.5 429.8 288.2 421.3 294.4 415.9 C300.6 410.5 308.4 403.5 315.0 397.7 C321.6 391.9 331.9 383.6 338.5 377.0 C345.1 370.4 353.6 359.9 359.0 353.7 C364.4 347.5 370.9 340.4 374.8 335.5 C378.7 330.6 382.1 325.1 385.0 321.0 C387.9 316.9 391.9 312.9 394.0 308.0 C396.1 303.1 398.4 294.3 399.0 288.0 C399.6 281.7 399.2 270.3 398.0 266.0Z"/><path d="M514.6 266.0 C515.8 261.7 519.4 259.9 521.6 259.5 C523.9 259.1 527.2 262.0 529.6 263.5 C532.0 265.0 535.2 267.2 537.6 269.5 C540.0 271.8 542.5 273.7 545.6 278.5 C548.8 283.3 554.3 294.8 558.6 301.8 C562.9 308.8 568.2 317.2 574.1 325.0 C580.0 332.8 589.8 345.9 597.6 353.7 C605.4 361.5 619.0 370.4 626.0 377.0 C633.0 383.6 638.3 390.7 644.1 397.7 C649.9 404.7 660.9 418.9 664.8 423.7 C668.7 428.5 667.3 426.6 670.4 430.0 C673.5 433.4 681.3 442.1 685.2 446.7 C689.1 451.3 693.2 456.3 696.3 460.6 C699.4 464.9 702.8 471.4 705.6 475.4 C708.4 479.4 712.3 483.6 714.8 487.4 C717.3 491.1 720.1 496.5 722.2 500.4 C724.3 504.3 727.4 510.2 728.7 513.3 C730.0 516.4 731.2 519.8 731.0 521.2 C730.8 522.6 728.8 523.0 727.6 522.5 C726.4 522.0 724.3 519.4 723.1 518.0 C721.9 516.6 720.4 513.5 719.5 513.3 C718.6 513.1 717.6 516.4 716.8 516.8 C716.0 517.2 715.5 517.6 714.1 516.0 C712.7 514.4 709.2 508.8 707.4 506.0 C705.6 503.2 702.9 498.1 701.9 497.6 C700.9 497.2 701.5 501.8 700.9 503.0 C700.3 504.2 699.1 505.8 698.2 505.8 C697.3 505.8 695.7 505.3 694.6 503.0 C693.5 500.7 692.4 493.4 690.7 490.2 C689.0 487.0 685.2 484.7 683.3 481.9 C681.4 479.1 678.8 474.3 677.8 471.7 C676.8 469.1 678.3 466.4 676.9 464.3 C675.5 462.2 672.6 460.9 668.6 457.8 C664.6 454.7 654.5 447.5 650.0 443.9 C645.5 440.3 643.7 438.2 638.9 434.0 C634.1 429.8 624.4 421.3 618.2 415.9 C612.0 410.5 604.2 403.5 597.6 397.7 C591.0 391.9 580.7 383.6 574.1 377.0 C567.5 370.4 559.0 359.9 553.6 353.7 C548.2 347.5 541.7 340.4 537.8 335.5 C533.9 330.6 530.5 325.1 527.6 321.0 C524.7 316.9 520.7 312.9 518.6 308.0 C516.5 303.1 514.2 294.3 513.6 288.0 C513.0 281.7 513.4 270.3 514.6 266.0Z"/><path d="M434.5 208 L434 226 Q432.5 240 421 247.5 Q408 253.5 393 258 Q384 261 379 268 L392 320 L395 385 L388 430 L381 486 L440 510 L456 540 L470 510 L533 486 L526 430 L520 385 L522 320 L533.6 268 Q528.6 261 519.6 258 Q504.6 253.5 491.6 247.5 Q480 240 478.6 226 L478 208 Z"/><path d="M381.0 486.0 C372.6 488.7 377.6 510.1 377.0 520.0 C376.4 529.9 375.4 546.5 376.5 560.0 C377.6 573.5 383.6 604.7 385.6 621.0 C387.6 637.3 390.8 669.7 391.7 682.0 C392.6 694.3 393.1 704.9 392.7 713.0 C392.3 721.1 389.1 736.1 388.6 743.0 C388.1 749.9 388.6 758.7 389.0 765.0 C389.4 771.3 390.7 781.2 391.7 790.0 C392.7 798.8 395.4 820.1 396.8 831.0 C398.2 841.9 401.6 863.9 402.0 872.0 C402.4 880.1 401.0 885.2 400.0 892.0 C399.0 898.8 395.6 916.6 394.7 923.0 C393.8 929.4 388.2 937.7 393.0 940.0 C397.8 942.3 426.1 942.0 431.0 940.0 C435.9 938.0 430.0 931.4 430.0 925.0 C430.0 918.6 431.5 897.7 431.0 892.0 C430.5 886.3 426.5 887.3 426.0 882.0 C425.5 876.7 426.1 862.9 427.0 852.0 C427.9 841.1 431.3 812.3 432.4 800.0 C433.5 787.7 435.3 770.3 435.5 760.0 C435.7 749.7 433.3 732.1 434.0 723.0 C434.7 713.9 438.9 705.6 440.6 692.0 C442.3 678.4 445.1 638.6 446.7 621.0 C448.3 603.4 451.8 570.8 452.8 560.0 C453.8 549.2 455.7 548.0 454.0 540.0 C452.3 532.0 449.7 507.2 440.0 500.0 C430.3 492.8 389.4 483.3 381.0 486.0Z"/><path d="M531.6 486.0 C540.0 488.7 535.0 510.1 535.6 520.0 C536.2 529.9 537.2 546.5 536.1 560.0 C535.0 573.5 529.0 604.7 527.0 621.0 C525.0 637.3 521.8 669.7 520.9 682.0 C520.0 694.3 519.5 704.9 519.9 713.0 C520.3 721.1 523.5 736.1 524.0 743.0 C524.5 749.9 524.0 758.7 523.6 765.0 C523.2 771.3 521.9 781.2 520.9 790.0 C519.9 798.8 517.2 820.1 515.8 831.0 C514.4 841.9 511.0 863.9 510.6 872.0 C510.2 880.1 511.6 885.2 512.6 892.0 C513.6 898.8 517.0 916.6 517.9 923.0 C518.8 929.4 524.4 937.7 519.6 940.0 C514.8 942.3 486.5 942.0 481.6 940.0 C476.7 938.0 482.6 931.4 482.6 925.0 C482.6 918.6 481.1 897.7 481.6 892.0 C482.1 886.3 486.1 887.3 486.6 882.0 C487.1 876.7 486.5 862.9 485.6 852.0 C484.7 841.1 481.3 812.3 480.2 800.0 C479.1 787.7 477.3 770.3 477.1 760.0 C476.9 749.7 479.3 732.1 478.6 723.0 C477.9 713.9 473.7 705.6 472.0 692.0 C470.3 678.4 467.5 638.6 465.9 621.0 C464.3 603.4 460.8 570.8 459.8 560.0 C458.8 549.2 456.9 548.0 458.6 540.0 C460.3 532.0 462.9 507.2 472.6 500.0 C482.3 492.8 523.2 483.3 531.6 486.0Z"/><path d="M456.0 118.5 C450.6 118.5 442.6 119.9 438.0 122.5 C433.4 125.1 427.7 131.1 425.0 136.0 C422.3 140.9 420.5 149.6 419.8 155.0 C419.0 160.4 419.8 167.3 420.2 172.0 C420.6 176.7 421.6 181.9 422.5 186.0 C423.4 190.1 425.1 196.3 426.0 199.0 C426.9 201.7 428.0 205.1 428.5 204.0 C429.0 202.9 429.6 196.2 429.5 192.0 C429.4 187.8 423.5 182.3 427.5 176.0 C431.5 169.7 447.4 150.0 456.0 150.0 C464.6 150.0 480.9 169.7 485.0 176.0 C489.1 182.3 483.1 187.8 483.0 192.0 C482.9 196.2 483.5 202.9 484.0 204.0 C484.5 205.1 485.6 201.7 486.5 199.0 C487.4 196.3 489.2 190.1 490.0 186.0 C490.8 181.9 491.7 176.7 492.0 172.0 C492.3 167.3 493.0 160.4 492.2 155.0 C491.5 149.6 489.7 140.9 487.0 136.0 C484.3 131.1 478.6 125.1 474.0 122.5 C469.4 119.9 461.4 118.5 456.0 118.5Z"/><ellipse cx="456.3" cy="178" rx="29" ry="40"/><ellipse cx="423.3" cy="181" rx="3.8" ry="10"/><ellipse cx="490" cy="181" rx="3.8" ry="10"/>
</g>
<rect x="807" y="566.5" width="684" height="440" fill="#c8c8c8" opacity="0.4"/>
<rect x="1098" y="65" width="2" height="939" fill="#a9a9a9"/>
<path d="M832 464.5H1443" stroke="#7f9fc4" stroke-width="2" opacity="0.85"/>
<path d="M862 636.5H1372" stroke="#7f9bbd" stroke-width="1.8" opacity="0.85"/><path d="M862 798H1372" stroke="#7f9bbd" stroke-width="1.2" opacity="0.8"/>
<rect x="812" y="458" width="22" height="13" fill="#86b6ea"/><path d="M814 461H832M814 467.5H832" stroke="#222" stroke-width="1.6"/><path d="M815 460V469M831 460V469" stroke="#222" stroke-width="1"/>
<rect x="1443" y="458" width="22" height="13" fill="#86b6ea"/><path d="M1445 461H1463M1445 467.5H1463" stroke="#222" stroke-width="1.6"/><path d="M1446 460V469M1462 460V469" stroke="#222" stroke-width="1"/>
<path d="M1051.2 423.6 Q1038 466 998.3 483.2 L994.8 508.4 L1049.3 504.2 L997.5 520 L997.5 563.7 Q1101 567.5 1206.4 563.7 L1206.4 520 L1153.9 504.2 L1208.7 508.4 L1205.6 483.2 Q1166 466 1150.4 423.6 Q1135 458 1101.4 479.3 Q1068 458 1051.2 423.6Z" fill="#7494ab"/>
<path d="M1101.4 479.3 Q1068 458 1051.2 423.6 Q1038 466 998.3 483.2 L994.8 508.4 L1049.3 504.2 L997.5 520 L997.5 563.7 Q1050 566 1101.4 566" fill="none" stroke="#9c9c9c" stroke-width="1.3"/>
<path d="M1101.4 479.3 Q1135 458 1150.4 423.6 Q1166 466 1205.6 483.2 L1208.7 508.4 L1153.9 504.2 L1206.4 520 L1206.4 563.7 Q1150 566 1101.4 566" fill="none" stroke="#2b2b2b" stroke-width="1.4"/>
<path d="M1054.7 414.7 L1101.4 432.2 M1054.7 414.7 Q1070 448 1101.4 470.3" fill="none" stroke="#8f8f8f" stroke-width="1"/>
<path d="M1147.7 414.7 L1101.4 432.2 M1147.7 414.7 Q1133 448 1101.4 470.3 M1150.4 423.6 Q1135 458 1101.4 479.3" fill="none" stroke="#2b2b2b" stroke-width="1.3"/>
<path d="M1037 461 L1068 503.5 M1166 461 L1135 503.5 M997 503.5 H1206" stroke="#7b78c8" stroke-width="0.8" stroke-dasharray="2 3" opacity="0.6" fill="none"/>
<path d="M1101.6 432V566" stroke="#7cc0f4" stroke-width="3"/><path d="M1101.6 432V566" stroke="#0a0a0a" stroke-width="3" stroke-dasharray="4 4"/>
<circle cx="1147.7" cy="414.7" r="1.8" fill="#2b2b2b"/>
<circle cx="1150.4" cy="423.6" r="1.8" fill="#2b2b2b"/>
<circle cx="1205.6" cy="483.2" r="1.8" fill="#2b2b2b"/>
<circle cx="1208.7" cy="508.4" r="1.8" fill="#2b2b2b"/>
<circle cx="1153.9" cy="504.2" r="1.8" fill="#2b2b2b"/>
<circle cx="1206.4" cy="520" r="1.8" fill="#2b2b2b"/>
<circle cx="1206.4" cy="563.7" r="1.8" fill="#2b2b2b"/>
<circle cx="1101.4" cy="470.3" r="1.8" fill="#2b2b2b"/>
<circle cx="1101.4" cy="479.3" r="1.8" fill="#2b2b2b"/>
<circle cx="1150" cy="566" r="1.8" fill="#2b2b2b"/>
<circle cx="1054.7" cy="414.7" r="1.8" fill="#9a9a9a"/>
<circle cx="1051.2" cy="423.6" r="1.8" fill="#9a9a9a"/>
<circle cx="998.3" cy="483.2" r="1.8" fill="#9a9a9a"/>
<circle cx="994.8" cy="508.4" r="1.8" fill="#9a9a9a"/>
<circle cx="1049.3" cy="504.2" r="1.8" fill="#9a9a9a"/>
<circle cx="997.5" cy="520" r="1.8" fill="#9a9a9a"/>
<circle cx="997.5" cy="563.7" r="1.8" fill="#9a9a9a"/>
<path d="M1005.3 585.8 Q1109.3 617.2 1213.4 585.8 L1347.6 975 Q1109.3 1052 871.2 975Z" fill="#7494ab"/>
<clipPath id="clipL"><rect x="800" y="500" width="309.3" height="600"/></clipPath><clipPath id="clipR"><rect x="1109.3" y="500" width="400" height="600"/></clipPath><path d="M1005.3 585.8 Q1109.3 617.2 1213.4 585.8 L1347.6 975 Q1109.3 1052 871.2 975Z" fill="none" stroke="#ffff00" stroke-width="2.1" clip-path="url(#clipL)"/>
<path d="M1005.3 585.8 Q1109.3 617.2 1213.4 585.8 L1347.6 975 Q1109.3 1052 871.2 975Z" fill="none" stroke="#aeeeff" stroke-width="2.1" clip-path="url(#clipR)"/>
<path d="M1005 638 Q1040 730 1060 680 L1062 605 M1214 638 Q1180 730 1160 680 L1158 605" stroke="#7b78c8" stroke-width="0.7" stroke-dasharray="2 3" opacity="0.5" fill="none"/>
<path d="M1109.3 601.5V1003" stroke="#7cb4e6" stroke-width="3"/><path d="M1109.3 601.5V1003" stroke="#0a0a0a" stroke-width="3" stroke-dasharray="4 4"/>
<circle cx="1005.3" cy="585.8" r="1.7" fill="#2a2a2a"/>
<circle cx="1060" cy="599" r="1.7" fill="#2a2a2a"/>
<circle cx="996.5" cy="610" r="1.7" fill="#2a2a2a"/>
<circle cx="973.5" cy="677" r="1.7" fill="#2a2a2a"/>
<circle cx="926.5" cy="812.5" r="1.7" fill="#2a2a2a"/>
<circle cx="871.2" cy="975" r="1.7" fill="#2a2a2a"/>
<path d="M1385.7 565.7 L1435.4 571.4 L1435.4 679.8 C1433.7 681.3 1428.8 685.6 1425.0 688.6 C1421.2 691.6 1416.6 695.4 1412.4 698.0 C1408.2 700.6 1404.0 703.0 1399.8 704.3 C1395.6 705.6 1391.4 706.2 1387.2 706.0 C1383.0 705.8 1378.5 705.2 1374.6 702.8 C1370.7 700.4 1366.5 696.2 1363.6 691.7 C1360.7 687.2 1358.6 681.3 1357.3 676.0 C1356.0 670.7 1355.4 666.8 1355.7 660.0 C1356.0 653.2 1357.1 643.9 1358.9 635.0 C1360.8 626.1 1363.9 615.6 1366.8 606.7 C1369.7 597.8 1373.0 588.3 1376.2 581.5 C1379.4 574.7 1384.1 568.3 1385.7 565.7Z" fill="#7494ab" stroke="#7aaee2" stroke-width="8.5" stroke-linejoin="round"/>
<path d="M1385.7 565.7 L1435.4 571.4 L1435.4 679.8 C1433.7 681.3 1428.8 685.6 1425.0 688.6 C1421.2 691.6 1416.6 695.4 1412.4 698.0 C1408.2 700.6 1404.0 703.0 1399.8 704.3 C1395.6 705.6 1391.4 706.2 1387.2 706.0 C1383.0 705.8 1378.5 705.2 1374.6 702.8 C1370.7 700.4 1366.5 696.2 1363.6 691.7 C1360.7 687.2 1358.6 681.3 1357.3 676.0 C1356.0 670.7 1355.4 666.8 1355.7 660.0 C1356.0 653.2 1357.1 643.9 1358.9 635.0 C1360.8 626.1 1363.9 615.6 1366.8 606.7 C1369.7 597.8 1373.0 588.3 1376.2 581.5 C1379.4 574.7 1384.1 568.3 1385.7 565.7Z" fill="#7494ab" stroke="#2b2b2b" stroke-width="1"/>
<circle cx="1385.7" cy="565.7" r="1.8" fill="#2b2b2b"/>
<circle cx="1435.4" cy="571.4" r="1.8" fill="#2b2b2b"/>
<circle cx="1435.4" cy="679.8" r="1.8" fill="#2b2b2b"/>
<circle cx="1435.4" cy="597" r="1.8" fill="#2b2b2b"/>
<circle cx="1435.4" cy="668" r="1.8" fill="#2b2b2b"/>
<path d="M1383.5 728.9 L1432.9 733.6 L1432.9 842.9 C1431.1 844.4 1425.8 848.8 1421.9 851.7 C1418.0 854.6 1413.5 857.7 1409.3 860.2 C1405.1 862.7 1400.9 865.1 1396.7 866.5 C1392.5 867.9 1388.3 869.0 1384.1 868.7 C1379.9 868.5 1375.4 867.5 1371.5 865.0 C1367.6 862.5 1363.4 858.6 1360.5 853.9 C1357.6 849.2 1355.4 842.1 1354.2 836.6 C1353.0 831.1 1352.7 828.2 1353.2 820.9 C1353.7 813.5 1355.3 802.0 1357.3 792.5 C1359.3 783.0 1362.3 772.6 1365.2 764.2 C1368.1 755.8 1371.5 747.9 1374.6 742.0 C1377.6 736.1 1382.0 731.1 1383.5 728.9Z" fill="#7494ab" stroke="#7aaee2" stroke-width="8.5" stroke-linejoin="round"/>
<path d="M1383.5 728.9 L1432.9 733.6 L1432.9 842.9 C1431.1 844.4 1425.8 848.8 1421.9 851.7 C1418.0 854.6 1413.5 857.7 1409.3 860.2 C1405.1 862.7 1400.9 865.1 1396.7 866.5 C1392.5 867.9 1388.3 869.0 1384.1 868.7 C1379.9 868.5 1375.4 867.5 1371.5 865.0 C1367.6 862.5 1363.4 858.6 1360.5 853.9 C1357.6 849.2 1355.4 842.1 1354.2 836.6 C1353.0 831.1 1352.7 828.2 1353.2 820.9 C1353.7 813.5 1355.3 802.0 1357.3 792.5 C1359.3 783.0 1362.3 772.6 1365.2 764.2 C1368.1 755.8 1371.5 747.9 1374.6 742.0 C1377.6 736.1 1382.0 731.1 1383.5 728.9Z" fill="#7494ab" stroke="#2b2b2b" stroke-width="1"/>
<circle cx="1383.5" cy="728.9" r="1.8" fill="#2b2b2b"/>
<circle cx="1432.9" cy="733.6" r="1.8" fill="#2b2b2b"/>
<circle cx="1432.9" cy="842.9" r="1.8" fill="#2b2b2b"/>
<circle cx="1432.9" cy="760" r="1.8" fill="#2b2b2b"/>
<circle cx="1432.9" cy="831" r="1.8" fill="#2b2b2b"/>
<path d="M800 568 L834.5 566 Q858 615 865 660 Q868 703 838 706.5 Q818 704 800 689Z" fill="#7494ab" stroke="#77abe0" stroke-width="8.5" stroke-linejoin="round"/>
<path d="M800 568 L834.5 566 Q858 615 865 660 Q868 703 838 706.5 Q818 704 800 689Z" fill="#7494ab" stroke="#2b2b2b" stroke-width="1"/>
<circle cx="834.5" cy="566" r="1.8" fill="#2b2b2b"/>
<path d="M800 731 L837.0 729 Q860.5 778 867.5 823 Q870.5 866 840.5 869.5 Q820.5 867 800 852Z" fill="#7494ab" stroke="#4fb0f8" stroke-width="8.5" stroke-linejoin="round"/>
<path d="M800 731 L837.0 729 Q860.5 778 867.5 823 Q870.5 866 840.5 869.5 Q820.5 867 800 852Z" fill="#7494ab" stroke="#4fb0f8" stroke-width="1"/>
<circle cx="837.0" cy="729" r="1.8" fill="#2b2b2b"/>
<path d="M1495 848 L1454.7 966 L1495 979Z" fill="#7494ab" stroke="#2b2b2b" stroke-width="1"/>
<g filter="url(#tex)" opacity="0.16"><path d="M1051.2 423.6 Q1038 466 998.3 483.2 L994.8 508.4 L1049.3 504.2 L997.5 520 L997.5 563.7 Q1101 567.5 1206.4 563.7 L1206.4 520 L1153.9 504.2 L1208.7 508.4 L1205.6 483.2 Q1166 466 1150.4 423.6 Q1135 458 1101.4 479.3 Q1068 458 1051.2 423.6Z" fill="#fff"/><path d="M1005.3 585.8 Q1109.3 617.2 1213.4 585.8 L1347.6 975 Q1109.3 1052 871.2 975Z" fill="#fff"/></g>
<path d="M851.3 1003V566H1367.5V1003" fill="none" stroke="#111" stroke-width="1.1" stroke-dasharray="4 3"/>
<path d="M851.3 798H1367.5" fill="none" stroke="#333" stroke-width="1" stroke-dasharray="5 3"/>
<path d="M1109.3 536V566" fill="none" stroke="#111" stroke-width="1" stroke-dasharray="4 3"/>
<circle cx="851.3" cy="566" r="2.8" fill="#f4f4f4" stroke="#333" stroke-width="1"/>
<circle cx="1109.3" cy="566" r="2.8" fill="#f4f4f4" stroke="#333" stroke-width="1"/>
<circle cx="1367.5" cy="566" r="2.8" fill="#f4f4f4" stroke="#333" stroke-width="1"/>
<circle cx="1109.3" cy="535.7" r="2.8" fill="#f4f4f4" stroke="#333" stroke-width="1"/>
<circle cx="851.3" cy="798" r="2.8" fill="#f4f4f4" stroke="#333" stroke-width="1"/>
<circle cx="1367.5" cy="798" r="2.8" fill="#f4f4f4" stroke="#333" stroke-width="1"/>
<circle cx="1109.3" cy="798" r="2.8" fill="#f4f4f4" stroke="#333" stroke-width="1"/>
<text x="1400" y="643.5" text-anchor="middle" font-family="Liberation Sans,Noto Sans CJK KR,sans-serif" font-size="11.5" font-weight="700" fill="#111">손등감</text>
<text x="1394" y="808.5" text-anchor="middle" font-family="Liberation Sans,Noto Sans CJK KR,sans-serif" font-size="11.5" font-weight="700" fill="#111">손바닥감</text>
</svg>
<div class="pill" style="left:10px;top:8px;width:32px;height:156px;background:#505050"></div></div>
<div class="a" style="left:1574px;top:63px;width:340px;height:334px;background:#252528;"></div>
<div class="a" style="left:1574px;top:422px;width:340px;height:584px;background:#252528;"></div>
<div class="a" style="left:1574px;top:92px;width:309px;height:1px;background:#39393c;"></div>
<div class="a" style="left:1606px;top:91px;width:34px;height:2px;background:#5aa9ee;"></div>
<div class="a" style="left:1584px;top:142px;width:330px;height:20px;background:#19191c;"></div>
<div class="a" style="left:1596px;top:149.5px;width:0;height:0;border-left:3px solid transparent;border-right:3px solid transparent;border-top:5px solid #e6e6e6"></div>
<div class="t" style="left:1693px;top:145.8px;font-size:13.5px;color:#e6e6e6;">Primary</div>
<div class="a" style="left:1589px;top:164px;width:309px;height:41px;background:#2d3547;"></div>
<div class="a" style="left:1607px;top:166px;width:37px;height:37px;background:#6f90a8;"></div>
<div class="a" style="left:1607px;top:210px;width:37px;height:37px;background:#6f90a8;"></div>
<svg class="a" style="left:1587px;top:177px" width="14" height="14" viewBox="0 0 14 14"><path d="M2 7.2L5.4 10.6L12 3.2" stroke="#5aa9ee" stroke-width="2" fill="none"/></svg>
<div class="t" style="left:1652px;top:179.2px;font-size:12.7px;color:#5aa9ee;">V1_Woven_Denim_Lightweight</div>
<div class="t" style="left:1652px;top:222px;font-size:12.7px;width:199px;overflow:hidden">V1_Woven_Denim_Lightweight 복사</div>
<div class="a" style="left:1589px;top:249px;width:309px;height:1px;background:#303033;"></div>
<div class="t" style="left:1859px;top:117.5px;font-size:12px;color:#e6e6e6;">CLOFAB</div>
<div class="a" style="left:1836px;top:110px;width:1px;height:26px;background:#2c2c2f;"></div>
<div class="a" style="left:1904px;top:422px;width:10px;height:583px;background:#121214;"></div>
<div class="a" style="left:1906px;top:755px;width:7px;height:248px;background:#3c3c3f;border-radius:3px"></div>
<div class="a" style="left:1794px;top:422px;width:81px;height:4px;background:#1a1a1c;border-radius:0 0 4px 4px"></div>
<div class="a" style="left:1620px;top:428px;width:273px;height:1px;background:#303033;"></div>
<div class="t" style="left:1620px;top:437.0px;font-size:12px;color:#e6e6e6;">개별 두께 - 충돌(mm)</div>
<div class="a" style="left:1812px;top:430px;width:81px;height:21.5px;background:#1a1a1c;border-radius:4px"></div>
<div class="t" style="left:1820px;top:436.2px;font-size:12px;color:#e6e6e6;">2.5</div>
<div class="a" style="left:1620px;top:454px;width:273px;height:1px;background:#303033;"></div>
<div class="trir" style="left:1605.5px;top:473px"></div>
<div class="t" style="left:1620px;top:472.5px;font-size:12px;color:#e6e6e6;">압력</div>
<div class="a" style="left:1794px;top:455.5px;width:81px;height:21.5px;background:#1a1a1c;border-radius:4px"></div>
<div class="t" style="left:1802px;top:461.8px;font-size:12px;color:#e6e6e6;">0</div>
<div class="a" style="left:1775px;top:486px;width:100px;height:4px;background:#4a4a4d;border-radius:2px"></div>
<div class="a" style="left:1775px;top:486px;width:50.5px;height:4px;background:#9d9d9f;border-radius:2px"></div>
<div class="a" style="left:1821.0px;top:483.5px;width:9px;height:9px;background:#fff;border-radius:5px"></div>
<svg class="a" style="left:1878px;top:471px" width="12" height="12" viewBox="0 0 12 12"><path d="M6 0.5L8.3 3H3.7ZM6 11.5L8.3 9H3.7ZM0.5 6L3 3.7V8.3ZM11.5 6L9 3.7V8.3Z" fill="#ddd"/><circle cx="6" cy="6" r="1.6" fill="#ddd"/></svg>
<div class="a" style="left:1620px;top:520px;width:273px;height:1px;background:#303033;"></div>
<div class="tri" style="left:1586px;top:527.0px;border-top-color:#e6e6e6"></div>
<div class="t" style="left:1601px;top:523.6px;font-size:13px;color:#5aa9ee;">Geometry</div>
<div class="a" style="left:1601px;top:539px;width:292px;height:1px;background:#303033;"></div>
<div class="t" style="left:1620px;top:548.1px;font-size:12px;color:#e6e6e6;">개별 두께 - 렌더링 (mm)</div>
<div class="a" style="left:1812px;top:541px;width:81px;height:21.5px;background:#1a1a1c;border-radius:4px"></div>
<div class="t" style="left:1820px;top:547.2px;font-size:12px;color:#e6e6e6;">0.0</div>
<div class="a" style="left:1620px;top:565px;width:273px;height:1px;background:#303033;"></div>
<div class="tri" style="left:1605px;top:576.0px;border-top-color:#e6e6e6"></div>
<div class="t" style="left:1620px;top:573.6px;font-size:12.8px;color:#e6e6e6;">Extrusion Direction</div>
<div class="a" style="left:1777px;top:567px;width:116px;height:25px;background:#1a1a1c;border-radius:4px"></div>
<div class="t" style="left:1784px;top:575.0px;font-size:12px;color:#e6e6e6;">양면</div>
<div class="dd" style="left:1878.5px;top:577.0px"></div>
<div class="t" style="left:1639px;top:600.9px;font-size:12.8px;color:#e6e6e6;">Front Face</div>
<div class="a" style="left:1787px;top:599px;width:12px;height:12px;border-radius:3px;background:#5aa9ee"></div>
<svg class="a" style="left:1787px;top:599px" width="12" height="12" viewBox="0 0 12 12"><path d="M2.6 6.2L5 8.6L9.6 3.4" stroke="#fff" stroke-width="1.8" fill="none"/></svg>
<div class="t" style="left:1805px;top:600.1px;font-size:12.8px;color:#e6e6e6;">On</div>
<div class="a" style="left:1639px;top:618px;width:254px;height:1px;background:#303033;"></div>
<div class="t" style="left:1639px;top:626.7px;font-size:12.8px;color:#e6e6e6;">Back Face</div>
<div class="a" style="left:1787px;top:625px;width:12px;height:12px;border-radius:3px;background:#5aa9ee"></div>
<svg class="a" style="left:1787px;top:625px" width="12" height="12" viewBox="0 0 12 12"><path d="M2.6 6.2L5 8.6L9.6 3.4" stroke="#fff" stroke-width="1.8" fill="none"/></svg>
<div class="t" style="left:1805px;top:626.1px;font-size:12.8px;color:#e6e6e6;">On</div>
<div class="a" style="left:1639px;top:644px;width:254px;height:1px;background:#303033;"></div>
<div class="t" style="left:1639px;top:652.5px;font-size:12.8px;color:#e6e6e6;">Seam Face</div>
<div class="a" style="left:1787px;top:651px;width:12px;height:12px;border-radius:3px;border:1px solid #7a7a7c;background:#38383b"></div>
<div class="t" style="left:1805px;top:652.1px;font-size:12.8px;color:#e6e6e6;">Off</div>
<div class="a" style="left:1639px;top:670px;width:254px;height:1px;background:#303033;"></div>
<div class="tri" style="left:1605px;top:677.9px;border-top-color:#e6e6e6"></div>
<div class="t" style="left:1620px;top:675.9px;font-size:12px;color:#e6e6e6;">두께면</div>
<div class="a" style="left:1620px;top:690.6px;width:273px;height:1px;background:#303033;"></div>
<div class="t" style="left:1639px;top:708.2px;font-size:12px;color:#e6e6e6;">곡률 (%)</div>
<div class="a" style="left:1812px;top:691.5px;width:81px;height:20.5px;background:#1a1a1c;border-radius:4px"></div>
<div class="t" style="left:1820px;top:697.2px;font-size:12px;color:#e6e6e6;">100</div>
<div class="a" style="left:1809.5px;top:722px;width:83.5px;height:4px;background:#4a4a4d;border-radius:2px"></div>
<div class="a" style="left:1809.5px;top:722px;width:77.5px;height:4px;background:#9d9d9f;border-radius:2px"></div>
<div class="a" style="left:1882.5px;top:719.5px;width:9px;height:9px;background:#fff;border-radius:5px"></div>
<div class="a" style="left:1639px;top:735.3px;width:254px;height:1px;background:#303033;"></div>
<div class="t" style="left:1639px;top:753.3px;font-size:12px;color:#e6e6e6;">해상도</div>
<div class="a" style="left:1812px;top:736.5px;width:81px;height:21px;background:#1a1a1c;border-radius:4px"></div>
<div class="t" style="left:1820px;top:742.5px;font-size:12px;color:#e6e6e6;">6</div>
<div class="a" style="left:1809.5px;top:767px;width:83.5px;height:4px;background:#4a4a4d;border-radius:2px"></div>
<div class="a" style="left:1809.5px;top:767px;width:48.5px;height:4px;background:#9d9d9f;border-radius:2px"></div>
<div class="a" style="left:1853.5px;top:764.5px;width:9px;height:9px;background:#fff;border-radius:5px"></div>
<div class="a" style="left:1639px;top:780.4px;width:254px;height:1px;background:#303033;"></div>
<div class="t" style="left:1639px;top:788.8px;font-size:12px;color:#e6e6e6;">두 겹 표현</div>
<div class="a" style="left:1787px;top:787px;width:12px;height:12px;border-radius:3px;border:1px solid #7a7a7c;background:#38383b"></div>
<div class="t" style="left:1805px;top:788.1px;font-size:12.8px;color:#e6e6e6;">Off</div>
<div class="a" style="left:1639px;top:806px;width:254px;height:1px;background:#303033;"></div>
<div class="tri" style="left:1605px;top:813.9px;border-top-color:#e6e6e6"></div>
<div class="t" style="left:1620px;top:811.5px;font-size:12.8px;color:#e6e6e6;">UV Expansion</div>
<div class="a" style="left:1620px;top:826.3px;width:273px;height:1px;background:#303033;"></div>
<div class="t" style="left:1639px;top:834.7px;font-size:12.8px;color:#e6e6e6;">Back Face</div>
<div class="a" style="left:1787px;top:833px;width:12px;height:12px;border-radius:3px;border:1px solid #7a7a7c;background:#38383b"></div>
<div class="t" style="left:1805px;top:834.1px;font-size:12.8px;color:#e6e6e6;">Off</div>
<div class="a" style="left:1639px;top:852.4px;width:254px;height:1px;background:#303033;"></div>
<div class="t" style="left:1639px;top:860.7px;font-size:12.8px;color:#e6e6e6;">Side Face</div>
<div class="a" style="left:1787px;top:859px;width:12px;height:12px;border-radius:3px;border:1px solid #7a7a7c;background:#38383b"></div>
<div class="t" style="left:1805px;top:860.1px;font-size:12.8px;color:#e6e6e6;">Off</div>
<div class="a" style="left:1639px;top:878.2px;width:254px;height:1px;background:#303033;"></div>
<div class="t" style="left:1620px;top:887.5px;font-size:12px;color:#e6e6e6;">메시 유형</div>
<div class="a" style="left:1777px;top:880px;width:116px;height:25px;background:#1a1a1c;border-radius:4px"></div>
<div class="t" style="left:1784px;top:888.0px;font-size:12px;color:#e6e6e6;">삼각형</div>
<div class="dd" style="left:1878.5px;top:890.0px"></div>
<div class="a" style="left:1620px;top:905.5px;width:273px;height:1px;background:#303033;"></div>
<div class="t" style="left:1620px;top:913.5px;font-size:12px;color:#8d8d8f;">메시 개수</div>
<div class="a" style="left:1806px;top:908px;width:83px;height:20.5px;background:#1a1a1c;border-radius:4px"></div>
<div class="t" style="left:1814px;top:913.8px;font-size:12px;color:#5e5e60;">5430</div>
<div class="a" style="left:1620px;top:931.5px;width:273px;height:1px;background:#303033;"></div>
<div class="t" style="left:1620px;top:940.0px;font-size:12px;color:#8d8d8f;">점 개수</div>
<div class="a" style="left:1806px;top:933.6px;width:83px;height:21px;background:#1a1a1c;border-radius:4px"></div>
<div class="t" style="left:1814px;top:939.6px;font-size:12px;color:#5e5e60;">2799</div>
<div class="a" style="left:1620px;top:957.6px;width:273px;height:1px;background:#303033;"></div>
<div class="tri" style="left:1586px;top:965.1px;border-top-color:#e6e6e6"></div>
<div class="t" style="left:1601px;top:962.9px;font-size:12.5px;color:#5aa9ee;">배치</div>
<div class="a" style="left:1601px;top:977.5px;width:292px;height:1px;background:#303033;"></div>
<div class="t" style="left:1620px;top:986.2px;font-size:12px;color:#e6e6e6;">이름</div>
<div class="a" style="left:1736px;top:979px;width:157px;height:24.5px;background:#1a1a1c;border-radius:4px"></div>
<div class="t" style="left:1743px;top:986.4px;font-size:12.8px;color:#e6e6e6;">not assigned</div>
<div class="dd" style="left:1878.5px;top:988.75px"></div>
<div class="a" style="left:0px;top:1006px;width:1920px;height:33px;background:#18181b;"></div>
<div class="t" style="left:16px;top:1017.0px;font-size:11px;color:#d8d8d8;">Version: 2025.2.236 (r57278)</div>
<div class="a" style="left:0px;top:1039px;width:1920px;height:41px;background:linear-gradient(90deg,#cfe4ee 0%,#d3e4ee 50%,#dde6f0 100%);border-top:1px solid #f4f8fa"></div>
<div class="a" style="left:503px;top:1039px;width:160px;height:41px;background:#e7f0f5;"></div>
<div class="a" style="left:347px;top:1078px;width:152px;height:2px;background:#0f7bd7;"></div>
<div class="a" style="left:503px;top:1078px;width:160px;height:2px;background:#0f7bd7;"></div>
<div class="a" style="left:668px;top:1078px;width:152px;height:2px;background:#0f7bd7;"></div>
<svg class="a" style="left:16px;top:1052px" width="16" height="16" viewBox="0 0 16 16"><path d="M0 2.3L6.5 1.4V7.6H0ZM7.4 1.3L16 0V7.6H7.4ZM0 8.4H6.5V14.6L0 13.7ZM7.4 8.4H16V16L7.4 14.7Z" fill="#111"/></svg>
<svg class="a" style="left:60px;top:1048px" width="24" height="24" viewBox="0 0 24 24"><circle cx="14" cy="9.5" r="7" fill="none" stroke="#111" stroke-width="2.4"/><path d="M9 15L2 22.5" stroke="#111" stroke-width="2.8" stroke-linecap="round"/></svg>
<svg class="a" style="left:110px;top:1051px" width="20" height="18" viewBox="0 0 20 18"><rect x="1.5" y="5" width="10" height="8" fill="none" stroke="#111" stroke-width="1.6"/><path d="M1 1.5H12M1 16.5H12M15 1V4M15 7V11M15 14V17" stroke="#111" stroke-width="1.6"/><path d="M13.5 9H17" stroke="#111" stroke-width="1.6"/></svg>
<svg class="a" style="left:158px;top:1047px" width="26" height="26" viewBox="0 0 26 26"><defs><linearGradient id="eg1" x1="0" y1="0" x2="1" y2="1"><stop offset="0" stop-color="#35c1f1"/><stop offset="1" stop-color="#0b57a8"/></linearGradient><linearGradient id="eg2" x1="0" y1="0" x2="1" y2="0"><stop offset="0" stop-color="#2ec4d6"/><stop offset="1" stop-color="#6fdc5a"/></linearGradient></defs><circle cx="13" cy="13" r="12.5" fill="url(#eg1)"/><path d="M1 11C3 3 12 -1 19 2.5C25 5.5 26.5 12 24 16C22 19 17 19 16 16C17.5 13 15 9 11 9C6 9 2.5 12 1 16Z" fill="url(#eg2)"/><path d="M9.5 14C9 19 13 24 19 23.5C15 26 8 25 4.5 20C2 16 4 11 8 10C9.5 10 10 12 9.5 14Z" fill="#0c5fb3"/></svg>
<svg class="a" style="left:208px;top:1047px" width="24" height="26" viewBox="0 0 24 26"><path d="M6 3L21 2L22 21L5 24Z" fill="#e9e4d0"/><path d="M4 4L18 2L17 20L2 23Z" fill="#9fd8ec"/><path d="M4 4L18 2L17.8 5L3.8 7Z" fill="#cfd6da"/><path d="M17 20L2 23L4 24.5L19 22Z" fill="#c9c3a6"/></svg>
<svg class="a" style="left:257px;top:1049px" width="24" height="22" viewBox="0 0 24 22"><path d="M0 2H8L10 4.5H23V21H0Z" fill="#f4b73b"/><path d="M0 6H23V21H0Z" fill="#fbd15b"/><path d="M7 13H17V21H14V16H10V21H7Z" fill="#3b8fd8"/></svg>
<svg class="a" style="left:308px;top:1046px" width="18" height="28" viewBox="0 0 18 28"><rect x="0" y="0" width="18" height="28" fill="#3b3f42"/><rect x="2.5" y="2.5" width="13" height="5" fill="#c6d0d4"/><rect x="2.5" y="10.0" width="3.2" height="3" fill="#d9e0e3"/><rect x="2.5" y="14.4" width="3.2" height="3" fill="#d9e0e3"/><rect x="2.5" y="18.8" width="3.2" height="3" fill="#d9e0e3"/><rect x="2.5" y="23.200000000000003" width="3.2" height="3" fill="#d9e0e3"/><rect x="7.2" y="10.0" width="3.2" height="3" fill="#d9e0e3"/><rect x="7.2" y="14.4" width="3.2" height="3" fill="#d9e0e3"/><rect x="7.2" y="18.8" width="3.2" height="3" fill="#d9e0e3"/><rect x="7.2" y="23.200000000000003" width="3.2" height="3" fill="#d9e0e3"/><rect x="11.9" y="10.0" width="3.2" height="3" fill="#d9e0e3"/><rect x="11.9" y="14.4" width="3.2" height="3" fill="#d9e0e3"/><rect x="11.9" y="18.8" width="3.2" height="3" fill="#d9e0e3"/><rect x="11.9" y="23.200000000000003" width="3.2" height="3" fill="#d9e0e3"/></svg>
<svg class="a" style="left:353.5px;top:1049px" width="22" height="23" viewBox="0 0 22 23"><path d="M11 0L21 5.5V17.5L11 23L1 17.5V5.5Z" fill="#2f8dea"/><path d="M15.5 8.2A5.2 5.2 0 1 0 15.5 14.8" fill="none" stroke="#fff" stroke-width="2.6" stroke-dasharray="3.4 0.9"/></svg>
<svg class="a" style="left:514px;top:1049px" width="22" height="23" viewBox="0 0 22 23"><path d="M11 0L21 5.5V17.5L11 23L1 17.5V5.5Z" fill="#2f8dea"/><path d="M15.5 8.2A5.2 5.2 0 1 0 15.5 14.8" fill="none" stroke="#fff" stroke-width="2.6" stroke-dasharray="3.4 0.9"/></svg>
<div class="t" style="left:381.5px;top:1054.2px;font-size:12.5px;color:#111;">CLO Network Onli...</div>
<div class="t" style="left:541.5px;top:1054.2px;font-size:12.5px;color:#111;">CLO Network Onli...</div>
<svg class="a" style="left:673px;top:1048px" width="24" height="24" viewBox="0 0 24 24"><circle cx="12" cy="12" r="12" fill="#e33b2e"/><path d="M12 12L1.6 6A12 12 0 0 0 10 23.8Z" fill="#2ba24c"/><path d="M12 12L10 23.8A12 12 0 0 0 24 12Z" fill="#fbc116"/><path d="M12 12H24A12 12 0 0 0 22.4 6Z" fill="#fbc116"/><circle cx="12" cy="12" r="5.4" fill="#fff"/><circle cx="12" cy="12" r="4.2" fill="#3b7de9"/></svg>
<div class="t" style="left:703px;top:1054.2px;font-size:12.5px;color:#111;">수강후기 글쓰기 | ...</div>
<div class="a" style="left:1625px;top:1053px;width:16px;height:16px;background:#f7d730;border-radius:2px"></div>
<svg class="a" style="left:1627px;top:1055px" width="12" height="12" viewBox="0 0 12 12"><ellipse cx="6" cy="5" rx="5.5" ry="4.2" fill="#3a2a1a"/><path d="M3 8L2 11.5L6 8.5Z" fill="#3a2a1a"/></svg>
<svg class="a" style="left:1648px;top:1051px" width="18" height="19" viewBox="0 0 18 19"><path d="M8 1L15 3.5V9C15 13 12 16 8 17.5C4 16 1 13 1 9V3.5Z" fill="#fff" stroke="#111" stroke-width="1.3"/><path d="M8 1V17.5M1 9H15" stroke="#111" stroke-width="1.1"/><circle cx="13" cy="14" r="4.4" fill="#18a558"/><path d="M10.8 14L12.4 15.6L15.2 12.6" stroke="#fff" stroke-width="1.3" fill="none"/></svg>
<svg class="a" style="left:1673px;top:1052px" width="17" height="17" viewBox="0 0 17 17"><path d="M2 15A13 13 0 0 1 15 2" fill="none" stroke="#444" stroke-width="1.4"/><path d="M5.5 15A9.5 9.5 0 0 1 15 5.5" fill="none" stroke="#444" stroke-width="1.4"/><path d="M9 15A6 6 0 0 1 15 9" fill="none" stroke="#444" stroke-width="1.4"/><circle cx="13.5" cy="13.5" r="1.8" fill="#444"/></svg>
<div class="a" style="left:1697px;top:1053px;width:16px;height:15px;background:#1c1c1c;"></div>
<svg class="a" style="left:1699px;top:1056px" width="12" height="9" viewBox="0 0 12 9"><path d="M0 4.5C3 0 9 0 12 3C9 1.5 6 2 4.5 4.5C6 7 9 7.5 12 6C9 9 3 9 0 4.5Z" fill="#76b900"/></svg>
<svg class="a" style="left:1720px;top:1053px" width="18" height="15" viewBox="0 0 18 15"><path d="M1 5H4L8 1.5V13.5L4 10H1Z" fill="none" stroke="#111" stroke-width="1.3"/><path d="M11 5L16 10M16 5L11 10" stroke="#111" stroke-width="1.3"/></svg>
<svg class="a" style="left:1743px;top:1051px" width="18" height="18" viewBox="0 0 18 18"><path d="M2 16C1 9 5 2 10 2C14 2 16 6 15 9L17 14L13 13C11 16 6 17 2 16Z" fill="#4a4a4a"/><circle cx="9" cy="7" r="2.6" fill="#ddd"/></svg>
<svg class="a" style="left:1768px;top:1052px" width="17" height="17" viewBox="0 0 17 17"><circle cx="8.5" cy="8.5" r="7" fill="none" stroke="#8a9096" stroke-width="1.6"/><path d="M5.5 5.5L11.5 11.5M11.5 5.5L5.5 11.5" stroke="#8a9096" stroke-width="1.6"/></svg>
<div class="t" style="left:1826.5px;transform:translateX(-50%);top:1044.8px;font-size:12.5px;color:#111;">오후 5:27</div>
<div class="t" style="left:1826.5px;transform:translateX(-50%);top:1062.8px;font-size:12.5px;color:#111;">2026-01-09</div>
<svg class="a" style="left:1877px;top:1051px" width="19" height="18" viewBox="0 0 19 18"><path d="M1.5 1.5H17.5V13H10L6 16.5V13H1.5Z" fill="none" stroke="#111" stroke-width="1.4"/></svg>
<svg class="a" style="left:1810px;top:1015px" width="15" height="14" viewBox="0 0 15 14"><rect x="0.7" y="1.7" width="13.6" height="10.6" fill="none" stroke="#d8d8d8" stroke-width="1.4"/><rect x="1" y="2" width="6.5" height="10" fill="#a9a9ab"/><path d="M7.5 2V12" stroke="#d8d8d8" stroke-width="1.2"/></svg>
<div class="a" style="left:1834px;top:1016px;width:15px;height:12px;background:#e0e0e0;border-radius:2px"></div>
<div class="t" style="left:1841.5px;top:1017.5px;font-size:9.5px;font-weight:700;color:#18181b;transform:translateX(-50%)">3D</div>
<div class="a" style="left:1858.5px;top:1016px;width:15px;height:12px;background:#e0e0e0;border-radius:2px"></div>
<div class="t" style="left:1866.0px;top:1017.5px;font-size:9.5px;font-weight:700;color:#18181b;transform:translateX(-50%)">2D</div>
<svg class="a" style="left:1885px;top:1014px" width="15" height="15" viewBox="0 0 15 15"><path d="M12.5 7.5A5 5 0 1 1 10.6 3.6" fill="none" stroke="#e0e0e0" stroke-width="1.6"/><path d="M9 1L13.2 3.4L9.6 6.2Z" fill="#e0e0e0"/></svg>
<div class="a" style="left:1588px;top:10px;width:30px;height:27px;border-radius:6px;background:linear-gradient(135deg,#f3a5e3 0%,#c9a3f0 50%,#a6b4f6 100%)"></div>
<svg class="a" style="left:1593px;top:13px" width="20" height="21" viewBox="0 0 20 21"><path d="M3 17L14 5" stroke="#222" stroke-width="1.6"/><path d="M12.5 3.5L15.5 6.5" stroke="#222" stroke-width="2.6"/><path d="M5 3L5.8 5.2L8 6L5.8 6.8L5 9L4.2 6.8L2 6L4.2 5.2Z" fill="#222"/><path d="M15 11L15.7 13L17.7 13.7L15.7 14.4L15 16.4L14.3 14.4L12.3 13.7L14.3 13Z" fill="#222"/><path d="M2 11C5 8 9 12 12 9" stroke="#222" stroke-width="1.2" fill="none"/></svg>
<div class="a" style="left:1630px;top:10px;width:30px;height:27px;border-radius:6px;background:linear-gradient(135deg,#25d6a6 0%,#22b8c9 55%,#2d8fe6 100%)"></div>
<svg class="a" style="left:1634px;top:12px" width="22" height="23" viewBox="0 0 22 23"><circle cx="11" cy="7.5" r="4" fill="none" stroke="#10222c" stroke-width="1.9"/><circle cx="6.5" cy="15" r="4" fill="none" stroke="#10222c" stroke-width="1.9"/><circle cx="15.5" cy="15" r="4" fill="none" stroke="#10222c" stroke-width="1.9"/></svg>
<svg class="a" style="left:1685px;top:17px" width="13" height="13" viewBox="0 0 13 13"><path d="M1.5 1.5L6.5 6L11.5 1.5M1.5 6.5L6.5 11L11.5 6.5" fill="none" stroke="#e6e6e6" stroke-width="1.7"/></svg>
<div class="dd" style="left:1809.5px;top:21.5px"></div>
<div class="a" style="left:1841px;top:23.5px;width:11px;height:1.6px;background:#e6e6e6;"></div>
<svg class="a" style="left:1863px;top:18px" width="12" height="12" viewBox="0 0 12 12"><path d="M1 1L5 5M5 1.5V5H1.5M11 11L7 7M7 10.5V7H10.5" fill="none" stroke="#e6e6e6" stroke-width="1.3"/></svg>
<svg class="a" style="left:1885.5px;top:18.5px" width="11" height="11" viewBox="0 0 11 11"><path d="M1 1L10 10M10 1L1 10" stroke="#e6e6e6" stroke-width="1.7"/></svg>
<svg class="a" style="left:9.6px;top:13px" width="22" height="22" viewBox="0 0 22 22"><defs><linearGradient id="cl" x1="0" y1="0" x2="1" y2="1"><stop offset="0" stop-color="#2fb8f4"/><stop offset="1" stop-color="#1a84e4"/></linearGradient></defs><path d="M17.59 5.47A8.6 8.6 0 1 0 17.59 16.53" fill="none" stroke="url(#cl)" stroke-width="4.2" stroke-dasharray="7.68 0.9"/></svg>
<svg class="a" style="left:786px;top:48.5px" width="10" height="9" viewBox="0 0 10 9"><rect x="2.6" y="0.6" width="6.8" height="5" rx="1" fill="none" stroke="#cfcfcf" stroke-width="1.1"/><rect x="0.6" y="3" width="6.8" height="5.2" rx="1" fill="#1d1d20" stroke="#cfcfcf" stroke-width="1.1"/></svg>
<svg class="a" style="left:1555px;top:48.5px" width="10" height="9" viewBox="0 0 10 9"><rect x="2.6" y="0.6" width="6.8" height="5" rx="1" fill="none" stroke="#cfcfcf" stroke-width="1.1"/><rect x="0.6" y="3" width="6.8" height="5.2" rx="1" fill="#1d1d20" stroke="#cfcfcf" stroke-width="1.1"/></svg>
<svg class="a" style="left:1899px;top:48.5px" width="10" height="9" viewBox="0 0 10 9"><rect x="2.6" y="0.6" width="6.8" height="5" rx="1" fill="none" stroke="#cfcfcf" stroke-width="1.1"/><rect x="0.6" y="3" width="6.8" height="5.2" rx="1" fill="#1d1d20" stroke="#cfcfcf" stroke-width="1.1"/></svg>
<svg class="a" style="left:1899px;top:407.5px" width="10" height="9" viewBox="0 0 10 9"><rect x="2.6" y="0.6" width="6.8" height="5" rx="1" fill="none" stroke="#cfcfcf" stroke-width="1.1"/><rect x="0.6" y="3" width="6.8" height="5.2" rx="1" fill="#1d1d20" stroke="#cfcfcf" stroke-width="1.1"/></svg>
<svg class="a" style="left:1577px;top:48px" width="13" height="10" viewBox="0 0 13 10"><path d="M0.5 5H7.5M4.8 1.8L8 5L4.8 8.2" fill="none" stroke="#e6e6e6" stroke-width="1.4"/><path d="M11.5 0.5V9.5" stroke="#555" stroke-width="1"/></svg>
<svg class="a" style="left:1577px;top:407px" width="13" height="10" viewBox="0 0 13 10"><path d="M0.5 5H7.5M4.8 1.8L8 5L4.8 8.2" fill="none" stroke="#e6e6e6" stroke-width="1.4"/><path d="M11.5 0.5V9.5" stroke="#555" stroke-width="1"/></svg>
<svg width="0" height="0" style="position:absolute"><defs>
<linearGradient id="ig" x1="0" y1="0" x2="0" y2="1"><stop offset="0" stop-color="#a2a2a5"/><stop offset="1" stop-color="#68686b"/></linearGradient>
<linearGradient id="igd" x1="0" y1="0" x2="0" y2="1"><stop offset="0" stop-color="#858588"/><stop offset="1" stop-color="#606063"/></linearGradient>
<linearGradient id="iw" x1="0" y1="0" x2="0" y2="1"><stop offset="0" stop-color="#ffffff"/><stop offset="1" stop-color="#cfcfd1"/></linearGradient>
<linearGradient id="ib" x1="0" y1="0" x2="0" y2="1"><stop offset="0" stop-color="#2d4fb8"/><stop offset="0.55" stop-color="#3f8af0"/><stop offset="1" stop-color="#49b0ff"/></linearGradient>
<linearGradient id="ifab" x1="0" y1="0" x2="1" y2="1"><stop offset="0" stop-color="#1d6fe0"/><stop offset="1" stop-color="#58b6ff"/></linearGradient>
<pattern id="chk" width="4" height="4" patternUnits="userSpaceOnUse"><rect width="4" height="4" fill="#f2f2f2"/><rect width="2" height="2" fill="#222"/><rect x="2" y="2" width="2" height="2" fill="#222"/></pattern>
<symbol id="s-shirt" viewBox="0 0 24 24"><path d="M8.2 3.5Q12 6.5 15.8 3.5L22 7L19.8 11.6L17.6 10.6V20.5H6.4V10.6L4.2 11.6L2 7Z"/></symbol>
<symbol id="s-dress" viewBox="0 0 24 24"><path d="M8.5 3Q12 6 15.5 3L17.5 7L15.5 11L20 21H4L8.5 11L6.5 7Z"/></symbol>
<symbol id="s-sew" viewBox="0 0 24 24"><path d="M4 8.5Q4 6 6.5 6H16V3.5H18.5V6H21V19.5H4V17.5H13.5V11H9.5V14H7.6V16.5H6.2V14H4Z"/></symbol>
<symbol id="s-walk" viewBox="0 0 24 24"><circle cx="14" cy="3.6" r="2.4"/><path d="M9.5 8.5L14.5 7L16.5 11.5L20.5 11.2L20.5 12.8L15.5 13.2L14.5 11.2L13.2 14.5L16.5 18L17.5 22.5H15.6L14.8 18.8L11.5 16L9 20L4.5 22.5L3.8 21L7.6 18.8L10.6 12.5L10.8 9.8L8.2 11L7 14L5.4 13.4Z"/></symbol>
<symbol id="s-bust" viewBox="0 0 24 24"><circle cx="12" cy="8" r="5"/><path d="M3 22Q3 15 9.5 14.2L12 16L14.5 14.2Q21 15 21 22Z"/></symbol>
<symbol id="s-person" viewBox="0 0 24 24"><circle cx="12" cy="3.5" r="2.6"/><path d="M8.5 7H15.5L16 14L14.5 23H12.5L12 16L11.5 23H9.5L8 14Z"/></symbol>
</defs></svg>
<div class="a" style="left:39px;top:80px;width:32px;height:28px;background:#111113;border:1px solid #050506;border-radius:5px"></div>
<div class="a" style="left:39px;top:128px;width:32px;height:28px;background:#111113;border:1px solid #050506;border-radius:5px"></div>
<svg class="a" style="left:39.0px;top:78.0px" width="32" height="32" viewBox="0 0 32 32"><path d="M12 5H20V14H25.5L16 25L6.5 14H12Z" fill="url(#ib)"/><path d="M29 21V28H22Z" fill="#c8c8ca"/></svg>
<svg class="a" style="left:39.0px;top:126.0px" width="32" height="32" viewBox="0 0 32 32"><path d="M7 11Q9 5 14 7L24 13Q28 16 27 22L25 26Q20 28 17 25L8 17Q5 14 7 11Z" fill="url(#iw)"/><path d="M6.5 12Q5 15 8 17.5L11 14.5Q8 13 9.5 10Z" fill="#3f95f5"/><path d="M11 12L17 16" stroke="#555" stroke-width="1.2"/><path d="M29 21V28H22Z" fill="#c8c8ca"/></svg>
<svg class="a" style="left:39.0px;top:158.0px" width="32" height="32" viewBox="0 0 32 32"><path d="M3.5 4.5L10 8.5L3.5 12.5Z" fill="#a6a6a8"/><path d="M12 13Q11 7 17 6.5Q22 7 21 11" stroke="#bdbdbf" stroke-width="1.4" stroke-dasharray="2 2" fill="none"/><path d="M12 13Q12 19 16 20" stroke="#bdbdbf" stroke-width="1.4" stroke-dasharray="2 2" fill="none"/><path d="M19 18L25 7L27 8L22 19.5Z" fill="#e6e6e8"/><path d="M19 18.5L22 20Q21 24 16.5 24.5Q18.5 22 19 18.5Z" fill="#d0d0d2"/><path d="M29.5 22V29.5H22Z" fill="#a3a3a5"/></svg>
<svg class="a" style="left:39.0px;top:206.0px" width="32" height="32" viewBox="0 0 32 32"><path d="M3.5 4.5L10 8.5L3.5 12.5Z" fill="#a6a6a8"/><use href="#s-shirt" x="8" y="5" width="21" height="21" fill="url(#ig)" /><ellipse cx="18.5" cy="26" rx="9" ry="2.2" fill="#dedee0"/><path d="M14 8H23V24H14Z" fill="#d4d4d6" opacity="0.55"/><path d="M29.5 22V29.5H22Z" fill="#a3a3a5"/></svg>
<svg class="a" style="left:39.0px;top:254.0px" width="32" height="32" viewBox="0 0 32 32"><path d="M3.5 4.5L10 8.5L3.5 12.5Z" fill="#a6a6a8"/><use href="#s-sew" x="8" y="7" width="20" height="20" fill="url(#ig)" /><rect x="10" y="26.5" width="17" height="1.3" fill="#8b8b8d"/></svg>
<svg class="a" style="left:39.0px;top:286.0px" width="32" height="32" viewBox="0 0 32 32"><use href="#s-sew" x="8" y="4" width="20" height="20" fill="url(#ig)" /><path d="M7 27H24" stroke="#e0e0e0" stroke-width="1.5"/><circle cx="7" cy="27" r="1.6" fill="#fff"/><circle cx="24" cy="27" r="1.6" fill="#fff"/><path d="M29.5 22V29.5H22Z" fill="#a3a3a5"/></svg>
<svg class="a" style="left:39.0px;top:318.0px" width="32" height="32" viewBox="0 0 32 32"><use href="#s-sew" x="8" y="4" width="20" height="20" fill="url(#ig)" /><path d="M5 26Q10 22 14 26T23 25" stroke="#e0e0e0" stroke-width="1.5" fill="none"/><circle cx="14.5" cy="25.5" r="1.6" fill="#fff"/><path d="M29.5 22V29.5H22Z" fill="#a3a3a5"/></svg>
<svg class="a" style="left:39.0px;top:350.0px" width="32" height="32" viewBox="0 0 32 32"><path d="M6 12L10 10L12 14L14 10L18 12V27H6Z" fill="url(#iw)"/><path d="M12 14V27" stroke="#777" stroke-width="1"/><path d="M12 4Q14.5 4 14 7L13 10H11L10 7Q9.5 4 12 4Z" fill="#77777a"/><use href="#s-sew" x="15" y="11" width="14" height="14" fill="url(#ig)" /><rect x="5" y="27" width="24" height="1.2" fill="#8b8b8d"/></svg>
<svg class="a" style="left:39.0px;top:398.0px" width="32" height="32" viewBox="0 0 32 32"><path d="M3.5 4.5L10 8.5L3.5 12.5Z" fill="#a6a6a8"/><path d="M9 26L21.5 11" stroke="#bdbdbf" stroke-width="1.6"/><circle cx="23" cy="9.5" r="3" fill="#e8e8ea"/></svg>
<svg class="a" style="left:39.0px;top:430.0px" width="32" height="32" viewBox="0 0 32 32"><path d="M7 14Q7 8 15 7Q24 7 25 15L24 24Q18 27 13 24Z" fill="url(#ig)"/><ellipse cx="11.5" cy="18.5" rx="4.5" ry="7" fill="#2a2a2d" transform="rotate(-20 11.5 18.5)"/><path d="M17 14L23 18" stroke="#fff" stroke-width="1.6"/><circle cx="24" cy="18.5" r="2.4" fill="#f2f2f2"/><path d="M29.5 22V29.5H22Z" fill="#a3a3a5"/></svg>
<svg class="a" style="left:39.0px;top:478.0px" width="32" height="32" viewBox="0 0 32 32"><path d="M6 10L6 24L14 28L28 21L20 17" fill="none" stroke="#a9a9ab" stroke-width="1.5"/><path d="M6 10L14 6V19L6 24" fill="none" stroke="#a9a9ab" stroke-width="1.5"/><path d="M14 10H23V19H14" fill="#8d8d90" stroke="#c9c9cb" stroke-width="1.2"/><path d="M15 12Q20 12 21 18L23.5 16.5L22 22L17 20L19.5 19Q19 14.5 15 14Z" fill="#fff"/></svg>
<svg class="a" style="left:39.0px;top:510.0px" width="32" height="32" viewBox="0 0 32 32"><path d="M5 17L10 9L16 12L22 9L27 17V25H5Z" fill="url(#ig)"/><path d="M10 9L16 16L22 9L19 7H13Z" fill="#d8d8da"/><path d="M16 16V25M5 21H27" stroke="#5e5e61" stroke-width="1"/></svg>
<svg class="a" style="left:39.0px;top:542.0px" width="32" height="32" viewBox="0 0 32 32"><path d="M4 11L10 6H13L16 8L19 6H22L28 11L25 15L22.5 13.5V15H9.5V13.5L7 15Z" fill="url(#ig)"/><rect x="9.5" y="16.5" width="5.7" height="9" fill="#a3a3a5"/><rect x="16.8" y="16.5" width="5.7" height="9" fill="#a3a3a5"/></svg>
<svg class="a" style="left:39.0px;top:574.0px" width="32" height="32" viewBox="0 0 32 32"><use href="#s-person" x="9" y="3" width="14" height="22" fill="url(#igd)" /><path d="M5 15Q9 18 14 16V27Q9 29 5 26Z" fill="#d8d8da"/><path d="M27 15Q23 18 18 16V27Q23 29 27 26Z" fill="#c4c4c6"/></svg>
<svg class="a" style="left:39.0px;top:606.0px" width="32" height="32" viewBox="0 0 32 32"><use href="#s-person" x="9" y="3" width="14" height="22" fill="url(#igd)" /><path d="M5 15Q9 18 14 16V27Q9 29 5 26Z" fill="#d8d8da"/><path d="M27 15Q23 18 18 16V27Q23 29 27 26Z" fill="#c4c4c6"/><path d="M4 7A3 3 0 1 1 7 10" fill="none" stroke="#cfcfcf" stroke-width="1.2"/><path d="M2.5 6L4.2 8.6L6 6.2Z" fill="#cfcfcf"/></svg>
<svg class="a" style="left:39.0px;top:638.0px" width="32" height="32" viewBox="0 0 32 32"><circle cx="16" cy="7" r="3" fill="#8e8e91"/><use href="#s-shirt" x="5" y="8" width="22" height="20" fill="url(#ig)" /></svg>
<svg class="a" style="left:39.0px;top:686.0px" width="32" height="32" viewBox="0 0 32 32"><path d="M6 9L11 5L14 7L17 5L19 7V25H8V14L5 15Z" fill="#cfcfd1"/><path d="M8 8L18 24M12 6L19 18M7 14L14 25M17 6L8 20M19 12L10 25" stroke="#555" stroke-width="0.8"/><path d="M24 26V8" stroke="#f0f0f0" stroke-width="1.8"/><path d="M20.5 11L24 5L27.5 11Z" fill="#f0f0f0"/><path d="M29.5 22V29.5H22Z" fill="#a3a3a5"/></svg>
<svg class="a" style="left:39.0px;top:734.0px" width="32" height="32" viewBox="0 0 32 32"><path d="M3.5 4.5L10 8.5L3.5 12.5Z" fill="#a6a6a8"/><path d="M11 8Q10 20 24 22" stroke="#a6a6a8" stroke-width="4.5" fill="none"/><path d="M11.5 12L14 11.5M12.5 16L15 15M15 19.5L17 17.5M19 21.5L20 19" stroke="#3a3a3d" stroke-width="1"/><path d="M20 9Q26 9 26 15L24 22" stroke="#c9c9cb" stroke-width="1.6" fill="none"/><path d="M29.5 22V29.5H22Z" fill="#a3a3a5"/></svg>
<svg class="a" style="left:39.0px;top:766.0px" width="32" height="32" viewBox="0 0 32 32"><path d="M5 22L21 7L26 12L10 27Z" fill="url(#ig)"/><path d="M9 20.5L11 22.5M12 17.7L14 19.7M15 15L17 17M18 12L20 14M21 9.3L23 11.3" stroke="#333" stroke-width="1"/><path d="M22 6Q27 6 27 11" stroke="#cfcfcf" stroke-width="1.5" fill="none"/><path d="M29.5 22V29.5H22Z" fill="#a3a3a5"/></svg>
<svg class="a" style="left:39.0px;top:814.0px" width="32" height="32" viewBox="0 0 32 32"><path d="M3.5 4.5L10 8.5L3.5 12.5Z" fill="#a6a6a8"/><use href="#s-shirt" x="6" y="6" width="23" height="23" fill="url(#ig)" /><path d="M14 15V26M16 15V26M18 15V26M20 15V26M22 15V26" stroke="#f2f2f2" stroke-width="1"/></svg>
<svg class="a" style="left:39.0px;top:846.0px" width="32" height="32" viewBox="0 0 32 32"><use href="#s-shirt" x="6" y="6" width="23" height="23" fill="url(#ig)" /><path d="M14 15V26M16 15V26M18 15V26M20 15V26M22 15V26" stroke="#f2f2f2" stroke-width="1"/><path d="M29.5 22V29.5H22Z" fill="#a3a3a5"/></svg>
<svg class="a" style="left:78.0px;top:78.0px" width="32" height="32" viewBox="0 0 32 32"><path d="M3.5 4.5L10 8.5L3.5 12.5Z" fill="#a6a6a8"/><use href="#s-walk" x="6" y="2" width="26" height="28" fill="#8f8f92" /></svg>
<svg class="a" style="left:78.0px;top:126.0px" width="32" height="32" viewBox="0 0 32 32"><path d="M3.5 4.5L10 8.5L3.5 12.5Z" fill="#a6a6a8"/><use href="#s-shirt" x="4.5" y="5.5" width="25" height="25" fill="url(#igd)" /><path d="M9 11Q14 11 15 16T22 21" stroke="#efefef" stroke-width="1.8" fill="none"/><circle cx="9" cy="11" r="1.4" fill="#fff"/><circle cx="22" cy="21" r="1.4" fill="#fff"/><path d="M19.5 13.5L27 6L28.8 7.8L21.3 15.3Z" fill="#e9e9ea"/></svg>
<svg class="a" style="left:78.0px;top:158.0px" width="32" height="32" viewBox="0 0 32 32"><use href="#s-shirt" x="4.5" y="5.5" width="25" height="25" fill="url(#igd)" /><path d="M9 11Q14 11 15 16T22 21" stroke="#efefef" stroke-width="1.8" fill="none"/><circle cx="9" cy="11" r="1.4" fill="#fff"/><circle cx="22" cy="21" r="1.4" fill="#fff"/><path d="M19.5 13.5L27 6L28.8 7.8L21.3 15.3Z" fill="#e9e9ea"/></svg>
<svg class="a" style="left:78.0px;top:190.0px" width="32" height="32" viewBox="0 0 32 32"><use href="#s-shirt" x="4.5" y="5.5" width="25" height="25" fill="url(#igd)" /><path d="M9 11Q14 11 15 16T22 21" stroke="#efefef" stroke-width="1.8" fill="none"/><circle cx="9" cy="11" r="1.4" fill="#fff"/><circle cx="22" cy="21" r="1.4" fill="#fff"/><path d="M19.5 13.5L27 6L28.8 7.8L21.3 15.3Z" fill="#e9e9ea"/></svg>
<svg class="a" style="left:78.0px;top:238.0px" width="32" height="32" viewBox="0 0 32 32"><path d="M3.5 4.5L10 8.5L3.5 12.5Z" fill="#a6a6a8"/><use href="#s-dress" x="4.5" y="5.5" width="25" height="25" fill="url(#igd)" /><path d="M9 11Q14 11 15 16T22 21" stroke="#efefef" stroke-width="1.8" fill="none"/><circle cx="9" cy="11" r="1.4" fill="#fff"/><circle cx="22" cy="21" r="1.4" fill="#fff"/><path d="M19.5 13.5L27 6L28.8 7.8L21.3 15.3Z" fill="#e9e9ea"/></svg>
<svg class="a" style="left:78.0px;top:270.0px" width="32" height="32" viewBox="0 0 32 32"><use href="#s-dress" x="4.5" y="5.5" width="25" height="25" fill="url(#igd)" /><path d="M9 11Q14 11 15 16T22 21" stroke="#efefef" stroke-width="1.8" fill="none"/><circle cx="9" cy="11" r="1.4" fill="#fff"/><circle cx="22" cy="21" r="1.4" fill="#fff"/><path d="M19.5 13.5L27 6L28.8 7.8L21.3 15.3Z" fill="#e9e9ea"/><path d="M29.5 22V29.5H22Z" fill="#a3a3a5"/></svg>
<svg class="a" style="left:78.0px;top:318.0px" width="32" height="32" viewBox="0 0 32 32"><path d="M3.5 4.5L10 8.5L3.5 12.5Z" fill="#a6a6a8"/><path d="M14 8L26 6Q29 8 27 14L24 25L12 27Z" fill="url(#ig)"/><ellipse cx="25" cy="8" rx="3.2" ry="2" fill="#e6e6e6"/><path d="M8 16L18 16L18 27L8 27Z" fill="url(#chk)" transform="skewX(-8) translate(3 0)"/></svg>
<svg class="a" style="left:78.0px;top:350.0px" width="32" height="32" viewBox="0 0 32 32"><path d="M3.5 4.5L10 8.5L3.5 12.5Z" fill="#a6a6a8"/><use href="#s-shirt" x="5" y="5" width="25" height="25" fill="url(#ig)" /><rect x="13" y="16" width="9" height="9" fill="url(#chk)"/></svg>
<svg class="a" style="left:78.0px;top:382.0px" width="32" height="32" viewBox="0 0 32 32"><use href="#s-shirt" x="5" y="5" width="25" height="25" fill="url(#ig)" /><rect x="13" y="16" width="9" height="9" fill="url(#chk)"/></svg>
<svg class="a" style="left:78.0px;top:430.0px" width="32" height="32" viewBox="0 0 32 32"><path d="M3.5 4.5L10 8.5L3.5 12.5Z" fill="#a6a6a8"/><circle cx="19" cy="18" r="7" fill="url(#ig)"/><circle cx="16.7" cy="15.7" r="1.3" fill="#2a2a2d"/><circle cx="21.3" cy="15.7" r="1.3" fill="#2a2a2d"/><circle cx="16.7" cy="20.3" r="1.3" fill="#2a2a2d"/><circle cx="21.3" cy="20.3" r="1.3" fill="#2a2a2d"/><circle cx="8.5" cy="18" r="1.8" fill="none" stroke="#bbb" stroke-width="1"/><path d="M10.3 18H12" stroke="#bbb" stroke-width="1"/></svg>
<svg class="a" style="left:78.0px;top:462.0px" width="32" height="32" viewBox="0 0 32 32"><circle cx="6" cy="12" r="2.8" fill="none" stroke="#c9c9cb" stroke-width="1.4"/><path d="M8.8 12H27" stroke="#c9c9cb" stroke-width="2.2"/><path d="M29.5 22V29.5H22Z" fill="#a3a3a5"/></svg>
<svg class="a" style="left:78.0px;top:494.0px" width="32" height="32" viewBox="0 0 32 32"><rect x="3" y="7" width="6" height="5" fill="#c9c9cb"/><path d="M4.3 7V5.2A1.7 1.7 0 0 1 7.7 5.2V7" fill="none" stroke="#c9c9cb" stroke-width="1.1"/><circle cx="20" cy="16" r="7" fill="url(#ig)"/><circle cx="17.7" cy="13.7" r="1.3" fill="#2a2a2d"/><circle cx="22.3" cy="13.7" r="1.3" fill="#2a2a2d"/><circle cx="17.7" cy="18.3" r="1.3" fill="#2a2a2d"/><circle cx="22.3" cy="18.3" r="1.3" fill="#2a2a2d"/><rect x="22.5" y="5" width="5" height="22" rx="2.5" fill="none" stroke="#d9d9db" stroke-width="1.4"/></svg>
<svg class="a" style="left:78.0px;top:542.0px" width="32" height="32" viewBox="0 0 32 32"><path d="M3.5 4.5L10 8.5L3.5 12.5Z" fill="#a6a6a8"/><rect x="9" y="9" width="19" height="18" fill="url(#igd)"/><path d="M18.5 4V27" stroke="#e4e4e6" stroke-width="3" stroke-dasharray="1.4 1.2"/><path d="M15.5 6Q18.5 2 21.5 6V14Q18.5 16 15.5 14Z" fill="#efeff0"/><rect x="17.3" y="7" width="2.4" height="5" rx="1.2" fill="#555"/></svg>
<svg class="a" style="left:78.0px;top:574.0px" width="32" height="32" viewBox="0 0 32 32"><rect x="9" y="9" width="19" height="18" fill="url(#igd)"/><path d="M18.5 4V27" stroke="#e4e4e6" stroke-width="3" stroke-dasharray="1.4 1.2"/><path d="M15.5 6Q18.5 2 21.5 6V14Q18.5 16 15.5 14Z" fill="#efeff0"/><rect x="17.3" y="7" width="2.4" height="5" rx="1.2" fill="#555"/></svg>
<svg class="a" style="left:78.0px;top:622.0px" width="32" height="32" viewBox="0 0 32 32"><path d="M3.5 4.5L10 8.5L3.5 12.5Z" fill="#a6a6a8"/><rect x="9" y="8" width="18" height="18" fill="url(#igd)"/><rect x="23.5" y="6" width="4.5" height="21" rx="2" fill="#d0d0d2"/></svg>
<svg class="a" style="left:78.0px;top:654.0px" width="32" height="32" viewBox="0 0 32 32"><rect x="9" y="8" width="18" height="18" fill="url(#igd)"/><rect x="23.5" y="6" width="4.5" height="21" rx="2" fill="#d0d0d2"/></svg>
<svg class="a" style="left:78.0px;top:702.0px" width="32" height="32" viewBox="0 0 32 32"><path d="M3.5 4.5L10 8.5L3.5 12.5Z" fill="#a6a6a8"/><rect x="9" y="8" width="18" height="18" fill="url(#igd)"/><rect x="23" y="8" width="4.5" height="18" fill="#dadadc"/></svg>
<svg class="a" style="left:78.0px;top:734.0px" width="32" height="32" viewBox="0 0 32 32"><rect x="9" y="8" width="18" height="18" fill="url(#igd)"/><rect x="23" y="8" width="4.5" height="18" fill="#dadadc"/></svg>
<svg class="a" style="left:78.0px;top:782.0px" width="32" height="32" viewBox="0 0 32 32"><path d="M12 8V19A4 4 0 0 0 20 19V8H17V18A1 1 0 0 1 15 18V8Z" fill="url(#iw)"/><path d="M3 15H8M6 12.5L9 15L6 17.5M29 15H24M26 12.5L23 15L26 17.5" stroke="#fff" stroke-width="1.5" fill="none"/></svg>
<div class="sep" style="left:41px;top:71px;width:28px"></div>
<div class="sep" style="left:41px;top:119px;width:28px"></div>
<div class="sep" style="left:41px;top:199px;width:28px"></div>
<div class="sep" style="left:41px;top:247px;width:28px"></div>
<div class="sep" style="left:41px;top:390px;width:28px"></div>
<div class="sep" style="left:41px;top:470px;width:28px"></div>
<div class="sep" style="left:41px;top:678px;width:28px"></div>
<div class="sep" style="left:41px;top:726px;width:28px"></div>
<div class="sep" style="left:41px;top:806px;width:28px"></div>
<div class="sep" style="left:80px;top:71px;width:28px"></div>
<div class="sep" style="left:80px;top:119px;width:28px"></div>
<div class="sep" style="left:80px;top:231px;width:28px"></div>
<div class="sep" style="left:80px;top:311px;width:28px"></div>
<div class="sep" style="left:80px;top:423px;width:28px"></div>
<div class="sep" style="left:80px;top:535px;width:28px"></div>
<div class="sep" style="left:80px;top:615px;width:28px"></div>
<div class="sep" style="left:80px;top:695px;width:28px"></div>
<div class="sep" style="left:80px;top:775px;width:28px"></div>
<div class="a" style="left:1496px;top:80px;width:32px;height:28px;background:#111113;border:1px solid #050506;border-radius:5px"></div>
<svg class="a" style="left:1496.0px;top:78.0px" width="32" height="32" viewBox="0 0 32 32"><path d="M5 4L11.5 8L5 12Z" fill="#f0f0f0"/><path d="M9 26H27V8Z" fill="#2d64c8"/><path d="M9 26H27V8Z" fill="none" stroke="#3f8af0" stroke-width="1"/></svg>
<svg class="a" style="left:1496.0px;top:110.0px" width="32" height="32" viewBox="0 0 32 32"><path d="M3.5 4.5L10 8.5L3.5 12.5Z" fill="#a6a6a8"/><path d="M9 25H25V9Z" fill="none" stroke="#c9c9cb" stroke-width="1.6"/><circle cx="9" cy="25" r="1.9" fill="#fff"/><circle cx="25" cy="25" r="1.9" fill="#fff"/><circle cx="25" cy="9" r="1.9" fill="#fff"/><path d="M29.5 22V29.5H22Z" fill="#a3a3a5"/></svg>
<svg class="a" style="left:1496.0px;top:142.0px" width="32" height="32" viewBox="0 0 32 32"><path d="M7 6H17L26 15L17 26H7Z" fill="url(#ig)"/><path d="M17 6L26 15L17 26" fill="none" stroke="#e6e6e6" stroke-width="1.5"/><circle cx="17" cy="6" r="1.8" fill="#fff"/><circle cx="26" cy="15" r="1.8" fill="#fff"/><circle cx="15" cy="24" r="1.8" fill="#fff"/><path d="M29.5 22V29.5H22Z" fill="#a3a3a5"/></svg>
<svg class="a" style="left:1496.0px;top:174.0px" width="32" height="32" viewBox="0 0 32 32"><path d="M6 7H15Q17 12 26 13V25H6Z" fill="url(#ig)"/><path d="M29.5 22V29.5H22Z" fill="#a3a3a5"/></svg>
<svg class="a" style="left:1496.0px;top:206.0px" width="32" height="32" viewBox="0 0 32 32"><rect x="5" y="6" width="21" height="18" fill="url(#igd)"/><path d="M8 9H17L19 11H23V21H8Z" fill="none" stroke="#e9e9ea" stroke-width="1.4"/><path d="M29.5 22V29.5H22Z" fill="#a3a3a5"/></svg>
<svg class="a" style="left:1496.0px;top:238.0px" width="32" height="32" viewBox="0 0 32 32"><path d="M6 8L12 6L14 9H18L20 6L26 8L25 27H7Z" fill="url(#ig)"/><path d="M13 9Q19 11 13 13Q19 15 13 17Q19 19 13 21Q19 23 13 25M19 9Q13 11 19 13Q13 15 19 17Q13 19 19 21Q13 23 19 25" stroke="#f2f2f2" stroke-width="1" fill="none"/></svg>
<svg class="a" style="left:1496.0px;top:270.0px" width="32" height="32" viewBox="0 0 32 32"><rect x="5" y="7" width="21" height="17" fill="url(#igd)"/><path d="M8.5 10H19L22.5 13.5V21H8.5Z" fill="none" stroke="#f0f0f0" stroke-width="1.3" stroke-dasharray="1.8 1.6"/><path d="M29.5 22V29.5H22Z" fill="#a3a3a5"/></svg>
<svg class="a" style="left:1496.0px;top:302.0px" width="32" height="32" viewBox="0 0 32 32"><rect x="4" y="11" width="15" height="15" fill="#8a8a8d"/><path d="M15 4H27V12Q25 15 20 17Q15 15 15 12Z" fill="#e4e4e6"/><path d="M7 16H14V20Q12.5 23 10.5 24Q8.5 23 7 20Z" fill="#2a2a2d"/><path d="M8.5 17.5H12.5V19.8L10.5 21.5L8.5 19.8Z" fill="#f0f0f0"/></svg>
<svg class="a" style="left:1496.0px;top:334.0px" width="32" height="32" viewBox="0 0 32 32"><path d="M3.5 4.5L10 8.5L3.5 12.5Z" fill="#a6a6a8"/><path d="M8 26L25 8M16 17L27 27" stroke="#c9c9cb" stroke-width="1.6"/><circle cx="16.5" cy="17" r="2.2" fill="#fff"/></svg>
<svg class="a" style="left:1496.0px;top:366.0px" width="32" height="32" viewBox="0 0 32 32"><path d="M3.5 4.5L10 8.5L3.5 12.5Z" fill="#a6a6a8"/><path d="M13 8H17Q18 11 21 11Q22 8 23 8H25L27 14L25 16V26H13V17Q15 14 13 8Z" fill="none" stroke="#e9e9ea" stroke-width="1.7"/></svg>
<svg class="a" style="left:1496.0px;top:414.0px" width="32" height="32" viewBox="0 0 32 32"><rect x="6" y="8" width="13" height="17" fill="url(#ig)"/><path d="M17 10H27V23H17Z" fill="#9c9c9f"/><ellipse cx="18" cy="16.5" rx="2.6" ry="6.5" fill="#d8d8da"/><circle cx="18" cy="12" r="1.1" fill="#fff"/><circle cx="18" cy="21" r="1.1" fill="#fff"/></svg>
<svg class="a" style="left:1496.0px;top:462.0px" width="32" height="32" viewBox="0 0 32 32"><path d="M3.5 4.5L10 8.5L3.5 12.5Z" fill="#a6a6a8"/><path d="M14 8V26" stroke="#d0d0d2" stroke-width="1.4"/><circle cx="14" cy="8" r="1.6" fill="#fff"/><circle cx="14" cy="26" r="1.6" fill="#fff"/><rect x="18" y="7" width="8" height="20" fill="url(#ig)"/><path d="M18 9H22M18 11H21M18 13H22M18 15H21M18 17H22M18 19H21M18 21H22M18 23H21M18 25H22" stroke="#333" stroke-width="0.8"/></svg>
<svg class="a" style="left:1496.0px;top:494.0px" width="32" height="32" viewBox="0 0 32 32"><path d="M6 9H26" stroke="#d0d0d2" stroke-width="1.4"/><circle cx="6" cy="9" r="1.6" fill="#fff"/><circle cx="26" cy="9" r="1.6" fill="#fff"/><rect x="5" y="15" width="22" height="8" fill="url(#ig)"/><path d="M7 15V19M9 15V18M11 15V19M13 15V18M15 15V19M17 15V18M19 15V19M21 15V18M23 15V19M25 15V18" stroke="#333" stroke-width="0.8"/></svg>
<div class="t" style="left:1508px;top:546px;font-family:'Liberation Serif',serif;font-size:25px;color:#d2d2d4">A</div>
<svg class="a" style="left:1496.0px;top:542.0px" width="32" height="32" viewBox="0 0 32 32"><path d="M3.5 4.5L10 8.5L3.5 12.5Z" fill="#a6a6a8"/></svg>
<div class="t" style="left:1500px;top:574px;font-family:'Liberation Serif',serif;font-size:29px;color:#d2d2d4">A</div>
<svg class="a" style="left:1496.0px;top:574.0px" width="32" height="32" viewBox="0 0 32 32"><path d="M29.5 22V29.5H22Z" fill="#a3a3a5"/></svg>
<svg class="a" style="left:1496.0px;top:622.0px" width="32" height="32" viewBox="0 0 32 32"><rect x="5" y="7" width="21" height="17" fill="#3a3a3d" stroke="#7d7d80" stroke-width="1"/><path d="M10 8V23M15.5 8V23M21 8V23" stroke="#d4d4d6" stroke-width="1.3" stroke-dasharray="1.6 1.6"/><path d="M29.5 22V29.5H22Z" fill="#a3a3a5"/></svg>
<svg class="a" style="left:1496.0px;top:670.0px" width="32" height="32" viewBox="0 0 32 32"><path d="M3.5 4.5L10 8.5L3.5 12.5Z" fill="#a6a6a8"/><path d="M11 14L15 12L17 15L20 11L24 13V26H11Z" fill="url(#ig)"/><path d="M14 24L26 13" stroke="#f0f0f0" stroke-width="2"/><circle cx="14" cy="24" r="1.6" fill="#fff"/><path d="M18 9Q20 7 22 9T26 9" stroke="#aaa" stroke-width="1" fill="none"/><path d="M29.5 22V29.5H22Z" fill="#a3a3a5"/></svg>
<svg class="a" style="left:1496.0px;top:702.0px" width="32" height="32" viewBox="0 0 32 32"><use href="#s-person" x="6" y="3" width="12" height="24" fill="#77777a" /><path d="M14 15L19 13L21 16L23 13L27 15V27H14Z" fill="url(#ig)"/></svg>
<svg class="a" style="left:1535.0px;top:78.0px" width="32" height="32" viewBox="0 0 32 32"><path d="M3.5 4.5L10 8.5L3.5 12.5Z" fill="#a6a6a8"/><use href="#s-sew" x="8" y="7" width="20" height="20" fill="url(#ig)" /><rect x="10" y="26.5" width="17" height="1.3" fill="#8b8b8d"/></svg>
<svg class="a" style="left:1535.0px;top:110.0px" width="32" height="32" viewBox="0 0 32 32"><use href="#s-sew" x="8" y="4" width="20" height="20" fill="url(#ig)" /><path d="M7 27H24" stroke="#e0e0e0" stroke-width="1.5"/><circle cx="7" cy="27" r="1.6" fill="#fff"/><circle cx="24" cy="27" r="1.6" fill="#fff"/><path d="M29.5 22V29.5H22Z" fill="#a3a3a5"/></svg>
<svg class="a" style="left:1535.0px;top:142.0px" width="32" height="32" viewBox="0 0 32 32"><use href="#s-sew" x="8" y="4" width="20" height="20" fill="url(#ig)" /><path d="M5 26Q10 22 14 26T23 25" stroke="#e0e0e0" stroke-width="1.5" fill="none"/><circle cx="14.5" cy="25.5" r="1.6" fill="#fff"/><path d="M29.5 22V29.5H22Z" fill="#a3a3a5"/></svg>
<svg class="a" style="left:1535.0px;top:174.0px" width="32" height="32" viewBox="0 0 32 32"><use href="#s-sew" x="8" y="4" width="20" height="20" fill="url(#ig)" /><circle cx="5.5" cy="6.5" r="2.4" fill="none" stroke="#cfcfcf" stroke-width="1.3"/><path d="M7.3 8.3L9.6 10.6" stroke="#cfcfcf" stroke-width="1.3"/><rect x="10" y="25" width="17" height="1.3" fill="#8b8b8d"/></svg>
<svg class="a" style="left:1535.0px;top:222.0px" width="32" height="32" viewBox="0 0 32 32"><path d="M6 20Q7 11 17 9L22 8.5V11L18 11.5Q25 12 27 20Z" fill="url(#ig)"/><path d="M14 13H20V16H14Z" fill="#252528"/><rect x="5" y="21.5" width="23" height="1.6" fill="#8e8e91"/><rect x="4" y="24" width="25" height="1.2" fill="#5d5d60"/></svg>
<svg class="a" style="left:1535.0px;top:270.0px" width="32" height="32" viewBox="0 0 32 32"><path d="M3.5 4.5L10 8.5L3.5 12.5Z" fill="#a6a6a8"/><use href="#s-shirt" x="7" y="7" width="22" height="22" fill="url(#ig)" /></svg>
<svg class="a" style="left:1535.0px;top:318.0px" width="32" height="32" viewBox="0 0 32 32"><path d="M3.5 4.5L10 8.5L3.5 12.5Z" fill="#a6a6a8"/><path d="M14 8L26 6Q29 8 27 14L24 25L12 27Z" fill="url(#ig)"/><ellipse cx="25" cy="8" rx="3.2" ry="2" fill="#e6e6e6"/><path d="M8 16L18 16L18 27L8 27Z" fill="url(#chk)" transform="skewX(-8) translate(3 0)"/></svg>
<svg class="a" style="left:1535.0px;top:350.0px" width="32" height="32" viewBox="0 0 32 32"><path d="M3.5 4.5L10 8.5L3.5 12.5Z" fill="#a6a6a8"/><use href="#s-shirt" x="5" y="5" width="25" height="25" fill="url(#ig)" /><rect x="13" y="16" width="9" height="9" fill="url(#chk)"/></svg>
<svg class="a" style="left:1535.0px;top:382.0px" width="32" height="32" viewBox="0 0 32 32"><use href="#s-shirt" x="5" y="5" width="25" height="25" fill="url(#ig)" /><rect x="13" y="16" width="9" height="9" fill="url(#chk)"/></svg>
<svg class="a" style="left:1535.0px;top:430.0px" width="32" height="32" viewBox="0 0 32 32"><path d="M3.5 4.5L10 8.5L3.5 12.5Z" fill="#a6a6a8"/><path d="M10 27L27 10" stroke="#e6e6e8" stroke-width="1.8" stroke-dasharray="4 2.5"/></svg>
<svg class="a" style="left:1535.0px;top:462.0px" width="32" height="32" viewBox="0 0 32 32"><path d="M5 11H27" stroke="#f0f0f0" stroke-width="2" stroke-dasharray="4.5 2.5"/><path d="M6 19H26" stroke="#c9c9cb" stroke-width="1.4"/><circle cx="6" cy="19" r="1.7" fill="#fff"/><circle cx="26" cy="19" r="1.7" fill="#fff"/><path d="M29.5 22V29.5H22Z" fill="#a3a3a5"/></svg>
<svg class="a" style="left:1535.0px;top:510.0px" width="32" height="32" viewBox="0 0 32 32"><path d="M3.5 4.5L10 8.5L3.5 12.5Z" fill="#a6a6a8"/><path d="M13 7Q21 8 13 10.5Q21 13 13 15.5Q21 18 13 20.5Q21 23 13 25.5" stroke="#e0e0e2" stroke-width="1.6" fill="none"/><path d="M24 8V26" stroke="#c9c9cb" stroke-width="1.4"/><circle cx="24" cy="8" r="1.6" fill="#fff"/><circle cx="24" cy="26" r="1.6" fill="#fff"/></svg>
<svg class="a" style="left:1535.0px;top:542.0px" width="32" height="32" viewBox="0 0 32 32"><path d="M5 14Q6 6 8 10T11 10T14 10T17 10T20 10T23 10T26 8" stroke="#e6e6e8" stroke-width="1.6" fill="none"/><path d="M6 20H26" stroke="#c9c9cb" stroke-width="1.4"/><circle cx="6" cy="20" r="1.7" fill="#fff"/><circle cx="26" cy="20" r="1.7" fill="#fff"/><path d="M29.5 22V29.5H22Z" fill="#a3a3a5"/></svg>
<svg class="a" style="left:1535.0px;top:590.0px" width="32" height="32" viewBox="0 0 32 32"><path d="M5 14L10 11L12 14L15 11L18 13V26H5Z" fill="#8c8c8f"/><path d="M15 12L19 8L22 11L25 8L28 11V23H15Z" fill="url(#ig)"/><circle cx="17" cy="17.5" r="3.6" fill="none" stroke="#f4f4f4" stroke-width="1.4"/><path d="M9 22L26 13" stroke="#f4f4f4" stroke-width="1.2"/><path d="M15.4 17.5H18.6M17 15.9V19.1" stroke="#fff" stroke-width="1"/></svg>
<svg class="a" style="left:1535.0px;top:638.0px" width="32" height="32" viewBox="0 0 32 32"><path d="M9 8L13 5H19L23 8L27 12L25 25H7L5 12Z" fill="url(#ig)"/><path d="M6 13H26M6 17.5H26M6.5 22H25.5" stroke="#252528" stroke-width="1.6"/><path d="M16 6V26" stroke="#252528" stroke-width="1.2"/></svg>
<div class="sep" style="left:1498px;top:72px;width:28px"></div>
<div class="sep" style="left:1498px;top:407px;width:28px"></div>
<div class="sep" style="left:1498px;top:455px;width:28px"></div>
<div class="sep" style="left:1498px;top:535px;width:28px"></div>
<div class="sep" style="left:1498px;top:615px;width:28px"></div>
<div class="sep" style="left:1498px;top:663px;width:28px"></div>
<div class="sep" style="left:1537px;top:72px;width:28px"></div>
<div class="sep" style="left:1537px;top:215px;width:28px"></div>
<div class="sep" style="left:1537px;top:263px;width:28px"></div>
<div class="sep" style="left:1537px;top:311px;width:28px"></div>
<div class="sep" style="left:1537px;top:423px;width:28px"></div>
<div class="sep" style="left:1537px;top:503px;width:28px"></div>
<div class="sep" style="left:1537px;top:583px;width:28px"></div>
<div class="sep" style="left:1537px;top:631px;width:28px"></div>
<div class="sep" style="left:1537px;top:679px;width:28px"></div>
<svg class="a" style="left:124.0px;top:77.0px" width="32" height="32" viewBox="0 0 32 32"><path d="M16.5 7L25 11V20L16.5 24L8 20V11Z" fill="#8f8f92"/><path d="M16.5 7L25 11L16.5 15L8 11Z" fill="#c9c9cb"/><path d="M16.5 15V24L8 20V11Z" fill="#aeaeb0"/><path d="M17 24L26 20L28 21.5L19 25.5Z" fill="#1c1c1e"/><circle cx="7.5" cy="24" r="2" fill="#9b9b9e"/></svg>
<svg class="a" style="left:124.0px;top:108.0px" width="32" height="32" viewBox="0 0 32 32"><use href="#s-shirt" x="6" y="5" width="20" height="20" fill="#8d8d90" /><circle cx="18" cy="12" r="2.2" fill="none" stroke="#666" stroke-width="1"/><circle cx="6" cy="25" r="2.4" fill="#9b9b9e"/><rect x="9" y="22" width="15" height="2" fill="#77777a"/></svg>
<svg class="a" style="left:124.0px;top:149.0px" width="32" height="32" viewBox="0 0 32 32"><use href="#s-shirt" x="5" y="5" width="22" height="22" fill="url(#iw)" /></svg>
<svg class="a" style="left:124.0px;top:179.0px" width="32" height="32" viewBox="0 0 32 32"><circle cx="10" cy="14" r="4.6" fill="#e9e9ea"/><path d="M7.5 12.5H9M11 12.5H12.5M7.5 15.5H9M11 15.5H12.5" stroke="#444" stroke-width="1.1"/><path d="M13 12L22 5" stroke="#ddd" stroke-width="1.2"/><path d="M14 21L19 16.5L25 17.5V25H14Z" fill="url(#iw)"/><path d="M22 6Q26 9 24 16" stroke="#ccc" stroke-width="0.9" fill="none"/></svg>
<svg class="a" style="left:124.0px;top:209.0px" width="32" height="32" viewBox="0 0 32 32"><use href="#s-bust" x="5" y="5" width="22" height="22" fill="url(#iw)" /></svg>
<svg class="a" style="left:124.0px;top:250.0px" width="32" height="32" viewBox="0 0 32 32"><g transform="translate(16 16) scale(0.82) translate(-16 -16)"><path d="M11 9L25 6Q27 10 24 17L21 24L9 24Q11 16 11 9Z" fill="url(#ifab)"/><path d="M9 24Q7.5 17 11 9L6 11.5Q4.5 19 9 24Z" fill="#d9dee3"/><path d="M9 24L21 24Q18 27.5 12 27Q10 26.5 9 24Z" fill="#aab1b7"/></g></svg>
<svg class="a" style="left:124.0px;top:281.0px" width="32" height="32" viewBox="0 0 32 32"><g transform="translate(16 16) scale(0.82) translate(-16 -16)"><path d="M11 9L25 6Q27 10 24 17L21 24L9 24Q11 16 11 9Z" fill="#1f1f21"/><path d="M15 10L24 8Q25 12 21 19L14 22Q15 16 15 10Z" fill="#c9c9cb" opacity="0.75"/><path d="M9 24Q7.5 17 11 9L6 11.5Q4.5 19 9 24Z" fill="#6a6a6d"/><path d="M9 24L21 24Q18 27.5 12 27Q10 26.5 9 24Z" fill="#aab1b7"/></g></svg>
<svg class="a" style="left:124.0px;top:311.0px" width="32" height="32" viewBox="0 0 32 32"><circle cx="16.5" cy="13" r="6" fill="#f8dcc4"/><path d="M10 24.5Q10 20.5 13.5 19.5V16.5H19V19.5Q22.5 20.5 22.5 24.5Z" fill="#f0c49f"/><path d="M10.5 13Q10.5 7 16.5 7Q13 9 13 13Q13 17 15 18.5Q10.5 17.5 10.5 13Z" fill="#fbeadb"/></svg>
<svg class="a" style="left:124.0px;top:341.0px" width="32" height="32" viewBox="0 0 32 32"><circle cx="16" cy="16" r="9" fill="none" stroke="#f2f2f2" stroke-width="1.5"/><ellipse cx="16" cy="16" rx="4.2" ry="9" fill="none" stroke="#f2f2f2" stroke-width="1.2"/><path d="M7 16H25M16 7V25M8.5 11.5H23.5M8.5 20.5H23.5" stroke="#f2f2f2" stroke-width="1.2"/></svg>
<svg class="a" style="left:817.0px;top:76.0px" width="32" height="32" viewBox="0 0 32 32"><path d="M7 25L21 11L23 12.5Z" fill="#e4e4e6"/><path d="M21 11Q24 9 25 13Q25.5 17 28 18" stroke="#3f9bf0" stroke-width="1.6" fill="none"/></svg>
<svg class="a" style="left:817.0px;top:106.0px" width="32" height="32" viewBox="0 0 32 32"><use href="#s-shirt" x="5" y="5" width="22" height="22" fill="url(#iw)" /></svg>
<svg class="a" style="left:817.0px;top:136.0px" width="32" height="32" viewBox="0 0 32 32"><circle cx="16" cy="16" r="9" fill="#e9e9f2"/><circle cx="16.5" cy="11" r="1.5" fill="#2a4fd0"/><path d="M14 14.5H17.3L16 21H18" stroke="#2a4fd0" stroke-width="2" fill="none"/></svg>
<svg class="a" style="left:817.0px;top:166.0px" width="32" height="32" viewBox="0 0 32 32"><g transform="translate(16 16) scale(0.82) translate(-16 -16)"><path d="M11 9L25 6Q27 10 24 17L21 24L9 24Q11 16 11 9Z" fill="url(#ifab)"/><path d="M9 24Q7.5 17 11 9L6 11.5Q4.5 19 9 24Z" fill="#d9dee3"/><path d="M9 24L21 24Q18 27.5 12 27Q10 26.5 9 24Z" fill="#aab1b7"/></g></svg>
<svg class="a" style="left:817.0px;top:197.0px" width="32" height="32" viewBox="0 0 32 32"><use href="#s-shirt" x="5" y="5" width="22" height="22" fill="url(#iw)" /><rect x="8" y="19" width="7" height="6" rx="1" fill="#2f86e8"/><path d="M9.6 19V17.3A1.9 1.9 0 0 1 13.4 17.3V19" fill="none" stroke="#2f86e8" stroke-width="1.3"/><circle cx="11.5" cy="22" r="1" fill="#fff"/></svg>
<svg class="a" style="left:1575.0px;top:60.0px" width="32" height="32" viewBox="0 0 32 32"><path d="M9 10H23M9 16H23M9 22H23" stroke="#fff" stroke-width="2.3"/><path d="M4.5 10H7M4.5 16H7M4.5 22H7" stroke="#fff" stroke-width="2.3"/></svg>
<svg class="a" style="left:1607.0px;top:60.0px" width="32" height="32" viewBox="0 0 32 32"><path d="M10 10L24 8Q25 13 23 18L21 24L8 24Q10 16 10 10Z" fill="#5ab0f6"/><path d="M8 24Q7 17 10 10L6.5 12Q6 19 8 24Z" fill="#3d86d8"/><path d="M8 24L21 24L19 26L10 26Z" fill="#2f6fc0"/></svg>
<svg class="a" style="left:1640.0px;top:60.0px" width="32" height="32" viewBox="0 0 32 32"><rect x="8.5" y="8.5" width="15" height="15" fill="#fff"/><rect x="9.0" y="12.5" width="3.5" height="3.5" fill="#252528"/><rect x="9.0" y="19.5" width="3.5" height="3.5" fill="#252528"/><rect x="12.5" y="9.0" width="3.5" height="3.5" fill="#252528"/><rect x="12.5" y="16.0" width="3.5" height="3.5" fill="#252528"/><rect x="16.0" y="12.5" width="3.5" height="3.5" fill="#252528"/><rect x="16.0" y="19.5" width="3.5" height="3.5" fill="#252528"/><rect x="19.5" y="9.0" width="3.5" height="3.5" fill="#252528"/><rect x="19.5" y="16.0" width="3.5" height="3.5" fill="#252528"/><rect x="8.5" y="8.5" width="15" height="15" fill="none" stroke="#fff" stroke-width="1.2"/></svg>
<svg class="a" style="left:1672.0px;top:60.0px" width="32" height="32" viewBox="0 0 32 32"><circle cx="16" cy="16" r="8.2" fill="#fff"/><circle cx="13.3" cy="13.3" r="1.5" fill="#252528"/><circle cx="18.7" cy="13.3" r="1.5" fill="#252528"/><circle cx="13.3" cy="18.7" r="1.5" fill="#252528"/><circle cx="18.7" cy="18.7" r="1.5" fill="#252528"/></svg>
<svg class="a" style="left:1704.0px;top:60.0px" width="32" height="32" viewBox="0 0 32 32"><circle cx="10" cy="16" r="2.6" fill="#fff"/><path d="M10 16H25" stroke="#fff" stroke-width="1.8"/></svg>
<svg class="a" style="left:1736.0px;top:60.0px" width="32" height="32" viewBox="0 0 32 32"><path d="M9 24L24 9" stroke="#fff" stroke-width="2" stroke-dasharray="4.5 3"/></svg>
<svg class="a" style="left:1768.0px;top:60.0px" width="32" height="32" viewBox="0 0 32 32"><path d="M8 22Q7 14 11 14Q13 15 12 20Q14 11 17 12Q19 13 17 19Q20 9 23 10Q25 11 23 16" stroke="#fff" stroke-width="1.8" fill="none"/></svg>
<svg class="a" style="left:1800.0px;top:60.0px" width="32" height="32" viewBox="0 0 32 32"><path d="M8 8L15 12V16L8 20Z M24 8L17 12V16L24 20Z" fill="none" stroke="#fff" stroke-width="1.6"/><rect x="14" y="11" width="4" height="6" fill="#fff"/><path d="M12 17L9 25L13 23L15 18Z M20 17L23 25L19 23L17 18Z" fill="#bdbdbf"/></svg>
<svg class="a" style="left:1832.0px;top:60.0px" width="32" height="32" viewBox="0 0 32 32"><path d="M12 8Q16 5 20 8V14H12Z" fill="none" stroke="#fff" stroke-width="1.6"/><rect x="12" y="13" width="8" height="11" rx="2.5" fill="none" stroke="#fff" stroke-width="1.6"/><rect x="14.6" y="9" width="2.8" height="8" rx="1.4" fill="#fff"/></svg>
<svg class="a" style="left:1869px;top:66px" width="14" height="22" viewBox="0 0 14 22"><path d="M2 9L8 4H14V20H2Z" fill="#fff"/><path d="M8 4V10H14" stroke="#252528" stroke-width="1"/></svg>
<div class="a" style="left:1883px;top:63px;width:31px;height:30px;background:#2a2a2d"></div>
<div class="a" style="left:1888px;top:73px;width:0;height:0;border-top:3.5px solid transparent;border-bottom:3.5px solid transparent;border-right:5px solid #444"></div>
<div class="a" style="left:1903px;top:73px;width:0;height:0;border-top:3.5px solid transparent;border-bottom:3.5px solid transparent;border-left:5px solid #e6e6e6"></div>
<svg class="a" style="left:1586px;top:115px" width="14" height="14" viewBox="0 0 14 14"><circle cx="7" cy="4.5" r="2.6" fill="none" stroke="#22c9a0" stroke-width="1.3"/><circle cx="4" cy="9.5" r="2.6" fill="none" stroke="#2b8fe8" stroke-width="1.3"/><circle cx="10" cy="9.5" r="2.6" fill="none" stroke="#2b8fe8" stroke-width="1.3"/></svg>
<svg class="a" style="left:1817px;top:116px" width="14" height="13" viewBox="0 0 14 13"><path d="M0.5 2H5L6.2 3.5H12V11.5H0.5Z" fill="#e6e6e6"/><path d="M10.5 0V5M8 2.5H13" stroke="#e6e6e6" stroke-width="1.3"/><path d="M3.5 7.5H8.5M6 5.5V9.5" stroke="#252528" stroke-width="1"/></svg>
<svg class="a" style="left:1842px;top:117px" width="13" height="11" viewBox="0 0 13 11"><path d="M1 9Q0 2 6.5 1Q13 2 12 9L9.5 7.5L6.5 9.5L3.5 7.5Z" fill="#c9c9cb"/></svg>
<svg class="a" style="left:1751px;top:146px" width="13" height="13" viewBox="0 0 13 13"><path d="M1 12L1.8 8.6L9 1.4Q10 0.6 11 1.6T11.4 3.8L4.2 11Z" fill="#f0f0f0"/></svg>
<svg class="a" style="left:1836px;top:146px" width="13" height="13" viewBox="0 0 13 13"><path d="M1.5 5V11.5H8V8" fill="none" stroke="#f0f0f0" stroke-width="1.4"/><path d="M4.7 4V8.5M2.8 6.8L4.7 8.8L6.6 6.8" fill="none" stroke="#f0f0f0" stroke-width="1.2"/><path d="M9.5 0.5V5.5M7 3H12" stroke="#f0f0f0" stroke-width="1.4"/></svg>
<svg class="a" style="left:1857px;top:146px" width="12" height="12" viewBox="0 0 12 12"><path d="M6 0.5V11.5M0.5 6H11.5" stroke="#f0f0f0" stroke-width="1.7"/></svg>
<svg class="a" style="left:1876px;top:146px" width="14" height="12" viewBox="0 0 14 12"><path d="M0.5 1H5L6.3 2.6H12.5V4H0.5Z" fill="#f0f0f0"/><path d="M0.5 5H13.5L12.5 11.5H1.5Z" fill="#f0f0f0"/></svg>
<svg class="a" style="left:1862px;top:177.5px" width="13" height="13" viewBox="0 0 13 13"><rect x="0.5" y="0.5" width="12" height="12" rx="1.5" fill="#f0f0f0"/><path d="M6.5 2.5V7.5M4 5.5L6.5 8L9 5.5" stroke="#252528" stroke-width="1.4" fill="none"/><path d="M3 10H10" stroke="#252528" stroke-width="1.3"/></svg>
<svg class="a" style="left:1884px;top:182px" width="11" height="4" viewBox="0 0 11 4"><circle cx="1.5" cy="2" r="1.1" fill="#f0f0f0"/><circle cx="5.5" cy="2" r="1.1" fill="#f0f0f0"/><circle cx="9.5" cy="2" r="1.1" fill="#f0f0f0"/></svg>
<svg class="a" style="left:1862px;top:221.5px" width="13" height="13" viewBox="0 0 13 13"><rect x="0.5" y="0.5" width="12" height="12" rx="1.5" fill="#f0f0f0"/><path d="M6.5 2.5V7.5M4 5.5L6.5 8L9 5.5" stroke="#252528" stroke-width="1.4" fill="none"/><path d="M3 10H10" stroke="#252528" stroke-width="1.3"/></svg>
<svg class="a" style="left:1884px;top:226px" width="11" height="4" viewBox="0 0 11 4"><circle cx="1.5" cy="2" r="1.1" fill="#f0f0f0"/><circle cx="5.5" cy="2" r="1.1" fill="#f0f0f0"/><circle cx="9.5" cy="2" r="1.1" fill="#f0f0f0"/></svg>
</body></html>
